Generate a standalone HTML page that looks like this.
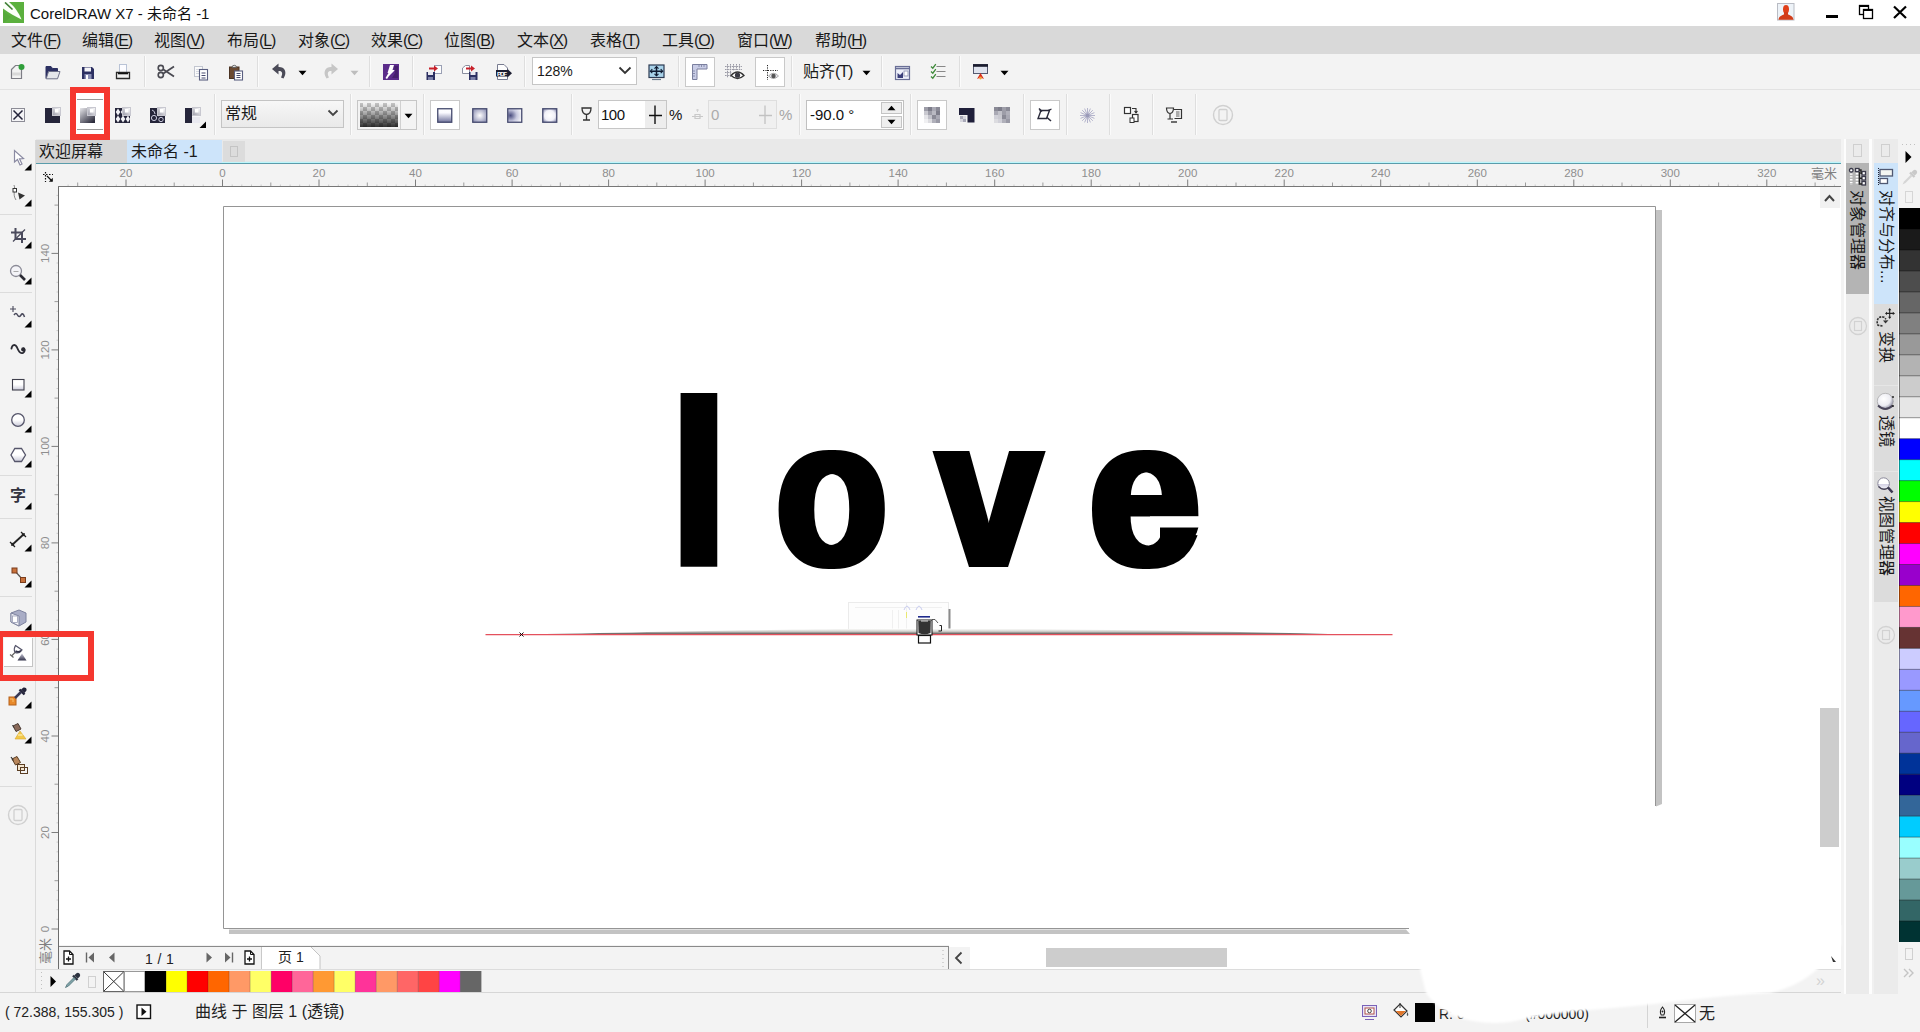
<!DOCTYPE html>
<html lang="zh"><head><meta charset="utf-8"><title>CorelDRAW X7 - 未命名 -1</title>
<style>
html,body{margin:0;padding:0;}
body{width:1920px;height:1032px;overflow:hidden;position:relative;background:#f3f3f3;
font-family:"Liberation Sans","Noto Sans CJK SC",sans-serif;}
body>div,body>svg,body>span{position:absolute;display:block;}
.t{white-space:nowrap;}
u{text-decoration:underline;text-underline-offset:2px;text-decoration-thickness:1px;}
svg text{font-family:"Liberation Sans","Noto Sans CJK SC",sans-serif;}
</style></head><body>
<div style="left:0px;top:0px;width:1920px;height:26px;background:#fff;"></div>
<div style="left:0px;top:26px;width:1920px;height:28px;background:#d9d9d9;"></div>
<div style="left:0px;top:54px;width:1920px;height:36px;background:#f3f3f3;"></div>
<div style="left:0px;top:89px;width:1920px;height:1px;background:#e2e2e2;"></div>
<div style="left:0px;top:90px;width:1920px;height:49px;background:#f3f3f3;"></div>
<div style="left:0px;top:139px;width:1920px;height:25px;background:#e9e9e9;"></div>
<div style="left:0px;top:139px;width:36px;height:860px;background:#f3f3f3;"></div>
<div style="left:36px;top:161px;width:1805px;height:1px;background:#dde8ea;"></div>
<div style="left:36px;top:162px;width:1805px;height:1px;background:#bdf6fb;"></div>
<div style="left:36px;top:163px;width:1805px;height:1px;background:#5a9cab;"></div>
<div style="left:36px;top:164px;width:1805px;height:23px;background:#f3f3f3;"></div>
<div style="left:36px;top:187px;width:23px;height:782px;background:#f3f3f3;"></div>
<div style="left:59px;top:187px;width:1782px;height:758px;background:#fff;"></div>
<div style="left:59px;top:945px;width:1782px;height:24px;background:#f3f3f3;"></div>
<div style="left:36px;top:969px;width:1805px;height:25px;background:#f3f3f3;"></div>
<div style="left:0px;top:994px;width:1920px;height:38px;background:#f3f3f3;"></div>
<div style="left:1841px;top:139px;width:79px;height:855px;background:#ececec;"></div>
<svg style="left:3px;top:2px;" width="21" height="21" viewBox="0 0 21 21"><rect width="21" height="21" fill="#5bb03e"/><path d="M0 0 L6 0 C11 4 16 11 18.5 17.5 C13 15 6 11 0 6.5 Z" fill="#fbfff8"/><path d="M2 0.5 L9.5 7.5" stroke="#3f7f35" stroke-width="1.7"/><path d="M0 21 V9 L8 15 Z" fill="#55a93a"/></svg>
<span class="t" style="left:30px;top:4px;font-size:15px;line-height:20px;color:#111;">CorelDRAW X7 - 未命名 -1</span>
<svg style="left:1776px;top:2px;" width="20" height="20" viewBox="0 0 20 20"><rect x="1.5" y="1.5" width="16.5" height="16.5" fill="#eef3f8" stroke="#b9bcc4"/><ellipse cx="10" cy="7.3" rx="3" ry="4.4" fill="#e0401a"/><path d="M2.5 17.8 C3 13.5 6.5 13.5 8 12.2 L12 12.2 C13.5 13.5 17 13.5 17.5 17.8Z" fill="#d23c18"/><rect x="8" y="10" width="4" height="3.5" fill="#d23c18"/></svg>
<div style="left:1826px;top:15px;width:12px;height:3px;background:#000;"></div>
<svg style="left:1858px;top:4px;" width="16" height="16" viewBox="0 0 16 16"><rect x="1.5" y="1.5" width="9" height="9" fill="#fff" stroke="#000" stroke-width="1.3"/><path d="M1 2 H11" stroke="#000" stroke-width="2"/><rect x="5.5" y="5.5" width="9" height="9" fill="#fff" stroke="#000" stroke-width="1.3"/><path d="M5 6 H15" stroke="#000" stroke-width="2"/></svg>
<svg style="left:1892px;top:4px;" width="16" height="16" viewBox="0 0 16 16"><path d="M2 2.5 L14 14 M14 2.5 L2 14" stroke="#000" stroke-width="2.2"/></svg>
<span class="t" style="left:11px;top:30px;font-size:16px;line-height:22px;color:#1a1a1a;">文件<span style="letter-spacing:-1.1px">(<u>F</u>)</span></span>
<span class="t" style="left:82px;top:30px;font-size:16px;line-height:22px;color:#1a1a1a;">编辑<span style="letter-spacing:-1.1px">(<u>E</u>)</span></span>
<span class="t" style="left:154px;top:30px;font-size:16px;line-height:22px;color:#1a1a1a;">视图<span style="letter-spacing:-1.1px">(<u>V</u>)</span></span>
<span class="t" style="left:227px;top:30px;font-size:16px;line-height:22px;color:#1a1a1a;">布局<span style="letter-spacing:-1.1px">(<u>L</u>)</span></span>
<span class="t" style="left:298px;top:30px;font-size:16px;line-height:22px;color:#1a1a1a;">对象<span style="letter-spacing:-1.1px">(<u>C</u>)</span></span>
<span class="t" style="left:371px;top:30px;font-size:16px;line-height:22px;color:#1a1a1a;">效果<span style="letter-spacing:-1.1px">(<u>C</u>)</span></span>
<span class="t" style="left:444px;top:30px;font-size:16px;line-height:22px;color:#1a1a1a;">位图<span style="letter-spacing:-1.1px">(<u>B</u>)</span></span>
<span class="t" style="left:517px;top:30px;font-size:16px;line-height:22px;color:#1a1a1a;">文本<span style="letter-spacing:-1.1px">(<u>X</u>)</span></span>
<span class="t" style="left:590px;top:30px;font-size:16px;line-height:22px;color:#1a1a1a;">表格<span style="letter-spacing:-1.1px">(<u>T</u>)</span></span>
<span class="t" style="left:662px;top:30px;font-size:16px;line-height:22px;color:#1a1a1a;">工具<span style="letter-spacing:-1.1px">(<u>O</u>)</span></span>
<span class="t" style="left:737px;top:30px;font-size:16px;line-height:22px;color:#1a1a1a;">窗口<span style="letter-spacing:-1.1px">(<u>W</u>)</span></span>
<span class="t" style="left:815px;top:30px;font-size:16px;line-height:22px;color:#1a1a1a;">帮助<span style="letter-spacing:-1.1px">(<u>H</u>)</span></span>
<div style="left:36px;top:140px;width:91px;height:23px;background:#d6d6d6;"></div>
<div style="left:127px;top:140px;width:95px;height:23px;background:#cde4fa;"></div>
<div style="left:223px;top:141px;width:22px;height:21px;background:#dcdcdc;"></div>
<svg style="left:229px;top:145px;" width="10" height="13" viewBox="0 0 10 13"><rect x="1.5" y="1.5" width="7" height="10" fill="none" stroke="#c4c4c4"/></svg>
<span class="t" style="left:39px;top:141px;font-size:16px;line-height:22px;color:#1a1a1a;">欢迎屏幕</span>
<span class="t" style="left:131px;top:141px;font-size:16px;line-height:22px;color:#1a1a1a;">未命名 -1</span>
<svg style="left:36px;top:164px;" width="1805" height="23" viewBox="0 0 1805 23"><path d="M32.1 20.5 V22" stroke="#cbcbcb"/><path d="M41.7 18.5 V22" stroke="#9c9c9c"/><path d="M51.4 20.5 V22" stroke="#cbcbcb"/><path d="M61.0 20.5 V22" stroke="#cbcbcb"/><path d="M70.7 20.5 V22" stroke="#cbcbcb"/><path d="M80.3 20.5 V22" stroke="#cbcbcb"/><path d="M90.0 15.5 V22" stroke="#7d7d7d"/><text x="90.0" y="13" font-size="11.5" fill="#8e8e8e" text-anchor="middle">20</text><path d="M99.6 20.5 V22" stroke="#cbcbcb"/><path d="M109.3 20.5 V22" stroke="#cbcbcb"/><path d="M118.9 20.5 V22" stroke="#cbcbcb"/><path d="M128.6 20.5 V22" stroke="#cbcbcb"/><path d="M138.2 18.5 V22" stroke="#9c9c9c"/><path d="M147.9 20.5 V22" stroke="#cbcbcb"/><path d="M157.5 20.5 V22" stroke="#cbcbcb"/><path d="M167.2 20.5 V22" stroke="#cbcbcb"/><path d="M176.8 20.5 V22" stroke="#cbcbcb"/><path d="M186.5 15.5 V22" stroke="#7d7d7d"/><text x="186.5" y="13" font-size="11.5" fill="#8e8e8e" text-anchor="middle">0</text><path d="M196.2 20.5 V22" stroke="#cbcbcb"/><path d="M205.8 20.5 V22" stroke="#cbcbcb"/><path d="M215.5 20.5 V22" stroke="#cbcbcb"/><path d="M225.1 20.5 V22" stroke="#cbcbcb"/><path d="M234.8 18.5 V22" stroke="#9c9c9c"/><path d="M244.4 20.5 V22" stroke="#cbcbcb"/><path d="M254.1 20.5 V22" stroke="#cbcbcb"/><path d="M263.7 20.5 V22" stroke="#cbcbcb"/><path d="M273.4 20.5 V22" stroke="#cbcbcb"/><path d="M283.0 15.5 V22" stroke="#7d7d7d"/><text x="283.0" y="13" font-size="11.5" fill="#8e8e8e" text-anchor="middle">20</text><path d="M292.7 20.5 V22" stroke="#cbcbcb"/><path d="M302.3 20.5 V22" stroke="#cbcbcb"/><path d="M312.0 20.5 V22" stroke="#cbcbcb"/><path d="M321.6 20.5 V22" stroke="#cbcbcb"/><path d="M331.3 18.5 V22" stroke="#9c9c9c"/><path d="M340.9 20.5 V22" stroke="#cbcbcb"/><path d="M350.6 20.5 V22" stroke="#cbcbcb"/><path d="M360.2 20.5 V22" stroke="#cbcbcb"/><path d="M369.9 20.5 V22" stroke="#cbcbcb"/><path d="M379.5 15.5 V22" stroke="#7d7d7d"/><text x="379.5" y="13" font-size="11.5" fill="#8e8e8e" text-anchor="middle">40</text><path d="M389.2 20.5 V22" stroke="#cbcbcb"/><path d="M398.8 20.5 V22" stroke="#cbcbcb"/><path d="M408.5 20.5 V22" stroke="#cbcbcb"/><path d="M418.1 20.5 V22" stroke="#cbcbcb"/><path d="M427.8 18.5 V22" stroke="#9c9c9c"/><path d="M437.5 20.5 V22" stroke="#cbcbcb"/><path d="M447.1 20.5 V22" stroke="#cbcbcb"/><path d="M456.8 20.5 V22" stroke="#cbcbcb"/><path d="M466.4 20.5 V22" stroke="#cbcbcb"/><path d="M476.1 15.5 V22" stroke="#7d7d7d"/><text x="476.1" y="13" font-size="11.5" fill="#8e8e8e" text-anchor="middle">60</text><path d="M485.7 20.5 V22" stroke="#cbcbcb"/><path d="M495.4 20.5 V22" stroke="#cbcbcb"/><path d="M505.0 20.5 V22" stroke="#cbcbcb"/><path d="M514.7 20.5 V22" stroke="#cbcbcb"/><path d="M524.3 18.5 V22" stroke="#9c9c9c"/><path d="M534.0 20.5 V22" stroke="#cbcbcb"/><path d="M543.6 20.5 V22" stroke="#cbcbcb"/><path d="M553.3 20.5 V22" stroke="#cbcbcb"/><path d="M562.9 20.5 V22" stroke="#cbcbcb"/><path d="M572.6 15.5 V22" stroke="#7d7d7d"/><text x="572.6" y="13" font-size="11.5" fill="#8e8e8e" text-anchor="middle">80</text><path d="M582.2 20.5 V22" stroke="#cbcbcb"/><path d="M591.9 20.5 V22" stroke="#cbcbcb"/><path d="M601.5 20.5 V22" stroke="#cbcbcb"/><path d="M611.2 20.5 V22" stroke="#cbcbcb"/><path d="M620.8 18.5 V22" stroke="#9c9c9c"/><path d="M630.5 20.5 V22" stroke="#cbcbcb"/><path d="M640.1 20.5 V22" stroke="#cbcbcb"/><path d="M649.8 20.5 V22" stroke="#cbcbcb"/><path d="M659.4 20.5 V22" stroke="#cbcbcb"/><path d="M669.1 15.5 V22" stroke="#7d7d7d"/><text x="669.1" y="13" font-size="11.5" fill="#8e8e8e" text-anchor="middle">100</text><path d="M678.8 20.5 V22" stroke="#cbcbcb"/><path d="M688.4 20.5 V22" stroke="#cbcbcb"/><path d="M698.1 20.5 V22" stroke="#cbcbcb"/><path d="M707.7 20.5 V22" stroke="#cbcbcb"/><path d="M717.4 18.5 V22" stroke="#9c9c9c"/><path d="M727.0 20.5 V22" stroke="#cbcbcb"/><path d="M736.7 20.5 V22" stroke="#cbcbcb"/><path d="M746.3 20.5 V22" stroke="#cbcbcb"/><path d="M756.0 20.5 V22" stroke="#cbcbcb"/><path d="M765.6 15.5 V22" stroke="#7d7d7d"/><text x="765.6" y="13" font-size="11.5" fill="#8e8e8e" text-anchor="middle">120</text><path d="M775.3 20.5 V22" stroke="#cbcbcb"/><path d="M784.9 20.5 V22" stroke="#cbcbcb"/><path d="M794.6 20.5 V22" stroke="#cbcbcb"/><path d="M804.2 20.5 V22" stroke="#cbcbcb"/><path d="M813.9 18.5 V22" stroke="#9c9c9c"/><path d="M823.5 20.5 V22" stroke="#cbcbcb"/><path d="M833.2 20.5 V22" stroke="#cbcbcb"/><path d="M842.8 20.5 V22" stroke="#cbcbcb"/><path d="M852.5 20.5 V22" stroke="#cbcbcb"/><path d="M862.1 15.5 V22" stroke="#7d7d7d"/><text x="862.1" y="13" font-size="11.5" fill="#8e8e8e" text-anchor="middle">140</text><path d="M871.8 20.5 V22" stroke="#cbcbcb"/><path d="M881.4 20.5 V22" stroke="#cbcbcb"/><path d="M891.1 20.5 V22" stroke="#cbcbcb"/><path d="M900.7 20.5 V22" stroke="#cbcbcb"/><path d="M910.4 18.5 V22" stroke="#9c9c9c"/><path d="M920.1 20.5 V22" stroke="#cbcbcb"/><path d="M929.7 20.5 V22" stroke="#cbcbcb"/><path d="M939.4 20.5 V22" stroke="#cbcbcb"/><path d="M949.0 20.5 V22" stroke="#cbcbcb"/><path d="M958.7 15.5 V22" stroke="#7d7d7d"/><text x="958.7" y="13" font-size="11.5" fill="#8e8e8e" text-anchor="middle">160</text><path d="M968.3 20.5 V22" stroke="#cbcbcb"/><path d="M978.0 20.5 V22" stroke="#cbcbcb"/><path d="M987.6 20.5 V22" stroke="#cbcbcb"/><path d="M997.3 20.5 V22" stroke="#cbcbcb"/><path d="M1006.9 18.5 V22" stroke="#9c9c9c"/><path d="M1016.6 20.5 V22" stroke="#cbcbcb"/><path d="M1026.2 20.5 V22" stroke="#cbcbcb"/><path d="M1035.9 20.5 V22" stroke="#cbcbcb"/><path d="M1045.5 20.5 V22" stroke="#cbcbcb"/><path d="M1055.2 15.5 V22" stroke="#7d7d7d"/><text x="1055.2" y="13" font-size="11.5" fill="#8e8e8e" text-anchor="middle">180</text><path d="M1064.8 20.5 V22" stroke="#cbcbcb"/><path d="M1074.5 20.5 V22" stroke="#cbcbcb"/><path d="M1084.1 20.5 V22" stroke="#cbcbcb"/><path d="M1093.8 20.5 V22" stroke="#cbcbcb"/><path d="M1103.4 18.5 V22" stroke="#9c9c9c"/><path d="M1113.1 20.5 V22" stroke="#cbcbcb"/><path d="M1122.7 20.5 V22" stroke="#cbcbcb"/><path d="M1132.4 20.5 V22" stroke="#cbcbcb"/><path d="M1142.0 20.5 V22" stroke="#cbcbcb"/><path d="M1151.7 15.5 V22" stroke="#7d7d7d"/><text x="1151.7" y="13" font-size="11.5" fill="#8e8e8e" text-anchor="middle">200</text><path d="M1161.4 20.5 V22" stroke="#cbcbcb"/><path d="M1171.0 20.5 V22" stroke="#cbcbcb"/><path d="M1180.7 20.5 V22" stroke="#cbcbcb"/><path d="M1190.3 20.5 V22" stroke="#cbcbcb"/><path d="M1200.0 18.5 V22" stroke="#9c9c9c"/><path d="M1209.6 20.5 V22" stroke="#cbcbcb"/><path d="M1219.3 20.5 V22" stroke="#cbcbcb"/><path d="M1228.9 20.5 V22" stroke="#cbcbcb"/><path d="M1238.6 20.5 V22" stroke="#cbcbcb"/><path d="M1248.2 15.5 V22" stroke="#7d7d7d"/><text x="1248.2" y="13" font-size="11.5" fill="#8e8e8e" text-anchor="middle">220</text><path d="M1257.9 20.5 V22" stroke="#cbcbcb"/><path d="M1267.5 20.5 V22" stroke="#cbcbcb"/><path d="M1277.2 20.5 V22" stroke="#cbcbcb"/><path d="M1286.8 20.5 V22" stroke="#cbcbcb"/><path d="M1296.5 18.5 V22" stroke="#9c9c9c"/><path d="M1306.1 20.5 V22" stroke="#cbcbcb"/><path d="M1315.8 20.5 V22" stroke="#cbcbcb"/><path d="M1325.4 20.5 V22" stroke="#cbcbcb"/><path d="M1335.1 20.5 V22" stroke="#cbcbcb"/><path d="M1344.7 15.5 V22" stroke="#7d7d7d"/><text x="1344.7" y="13" font-size="11.5" fill="#8e8e8e" text-anchor="middle">240</text><path d="M1354.4 20.5 V22" stroke="#cbcbcb"/><path d="M1364.0 20.5 V22" stroke="#cbcbcb"/><path d="M1373.7 20.5 V22" stroke="#cbcbcb"/><path d="M1383.3 20.5 V22" stroke="#cbcbcb"/><path d="M1393.0 18.5 V22" stroke="#9c9c9c"/><path d="M1402.7 20.5 V22" stroke="#cbcbcb"/><path d="M1412.3 20.5 V22" stroke="#cbcbcb"/><path d="M1422.0 20.5 V22" stroke="#cbcbcb"/><path d="M1431.6 20.5 V22" stroke="#cbcbcb"/><path d="M1441.3 15.5 V22" stroke="#7d7d7d"/><text x="1441.3" y="13" font-size="11.5" fill="#8e8e8e" text-anchor="middle">260</text><path d="M1450.9 20.5 V22" stroke="#cbcbcb"/><path d="M1460.6 20.5 V22" stroke="#cbcbcb"/><path d="M1470.2 20.5 V22" stroke="#cbcbcb"/><path d="M1479.9 20.5 V22" stroke="#cbcbcb"/><path d="M1489.5 18.5 V22" stroke="#9c9c9c"/><path d="M1499.2 20.5 V22" stroke="#cbcbcb"/><path d="M1508.8 20.5 V22" stroke="#cbcbcb"/><path d="M1518.5 20.5 V22" stroke="#cbcbcb"/><path d="M1528.1 20.5 V22" stroke="#cbcbcb"/><path d="M1537.8 15.5 V22" stroke="#7d7d7d"/><text x="1537.8" y="13" font-size="11.5" fill="#8e8e8e" text-anchor="middle">280</text><path d="M1547.4 20.5 V22" stroke="#cbcbcb"/><path d="M1557.1 20.5 V22" stroke="#cbcbcb"/><path d="M1566.7 20.5 V22" stroke="#cbcbcb"/><path d="M1576.4 20.5 V22" stroke="#cbcbcb"/><path d="M1586.0 18.5 V22" stroke="#9c9c9c"/><path d="M1595.7 20.5 V22" stroke="#cbcbcb"/><path d="M1605.3 20.5 V22" stroke="#cbcbcb"/><path d="M1615.0 20.5 V22" stroke="#cbcbcb"/><path d="M1624.6 20.5 V22" stroke="#cbcbcb"/><path d="M1634.3 15.5 V22" stroke="#7d7d7d"/><text x="1634.3" y="13" font-size="11.5" fill="#8e8e8e" text-anchor="middle">300</text><path d="M1644.0 20.5 V22" stroke="#cbcbcb"/><path d="M1653.6 20.5 V22" stroke="#cbcbcb"/><path d="M1663.3 20.5 V22" stroke="#cbcbcb"/><path d="M1672.9 20.5 V22" stroke="#cbcbcb"/><path d="M1682.6 18.5 V22" stroke="#9c9c9c"/><path d="M1692.2 20.5 V22" stroke="#cbcbcb"/><path d="M1701.9 20.5 V22" stroke="#cbcbcb"/><path d="M1711.5 20.5 V22" stroke="#cbcbcb"/><path d="M1721.2 20.5 V22" stroke="#cbcbcb"/><path d="M1730.8 15.5 V22" stroke="#7d7d7d"/><text x="1730.8" y="13" font-size="11.5" fill="#8e8e8e" text-anchor="middle">320</text><path d="M1740.5 20.5 V22" stroke="#cbcbcb"/><path d="M1750.1 20.5 V22" stroke="#cbcbcb"/><path d="M1759.8 20.5 V22" stroke="#cbcbcb"/><path d="M1769.4 20.5 V22" stroke="#cbcbcb"/><path d="M1779.1 18.5 V22" stroke="#9c9c9c"/><path d="M1788.7 20.5 V22" stroke="#cbcbcb"/><path d="M1798.4 20.5 V22" stroke="#cbcbcb"/><path d="M22 22.5 H1805" stroke="#777"/><text x="1788" y="13.5" font-size="13" fill="#808080" text-anchor="middle">毫米</text></svg>
<svg style="left:36px;top:187px;" width="23" height="790" viewBox="0 0 23 790"><path d="M15.5 742.0 H22" stroke="#7d7d7d"/><text transform="translate(13,742.0) rotate(-90)" font-size="11.5" fill="#8e8e8e" text-anchor="middle">0</text><path d="M20.5 732.3 H22" stroke="#cbcbcb"/><path d="M20.5 722.7 H22" stroke="#cbcbcb"/><path d="M20.5 713.0 H22" stroke="#cbcbcb"/><path d="M20.5 703.4 H22" stroke="#cbcbcb"/><path d="M18.5 693.7 H22" stroke="#9c9c9c"/><path d="M20.5 684.1 H22" stroke="#cbcbcb"/><path d="M20.5 674.4 H22" stroke="#cbcbcb"/><path d="M20.5 664.8 H22" stroke="#cbcbcb"/><path d="M20.5 655.1 H22" stroke="#cbcbcb"/><path d="M15.5 645.5 H22" stroke="#7d7d7d"/><text transform="translate(13,645.5) rotate(-90)" font-size="11.5" fill="#8e8e8e" text-anchor="middle">20</text><path d="M20.5 635.8 H22" stroke="#cbcbcb"/><path d="M20.5 626.2 H22" stroke="#cbcbcb"/><path d="M20.5 616.5 H22" stroke="#cbcbcb"/><path d="M20.5 606.9 H22" stroke="#cbcbcb"/><path d="M18.5 597.2 H22" stroke="#9c9c9c"/><path d="M20.5 587.6 H22" stroke="#cbcbcb"/><path d="M20.5 577.9 H22" stroke="#cbcbcb"/><path d="M20.5 568.3 H22" stroke="#cbcbcb"/><path d="M20.5 558.6 H22" stroke="#cbcbcb"/><path d="M15.5 549.0 H22" stroke="#7d7d7d"/><text transform="translate(13,549.0) rotate(-90)" font-size="11.5" fill="#8e8e8e" text-anchor="middle">40</text><path d="M20.5 539.3 H22" stroke="#cbcbcb"/><path d="M20.5 529.7 H22" stroke="#cbcbcb"/><path d="M20.5 520.0 H22" stroke="#cbcbcb"/><path d="M20.5 510.4 H22" stroke="#cbcbcb"/><path d="M18.5 500.7 H22" stroke="#9c9c9c"/><path d="M20.5 491.0 H22" stroke="#cbcbcb"/><path d="M20.5 481.4 H22" stroke="#cbcbcb"/><path d="M20.5 471.7 H22" stroke="#cbcbcb"/><path d="M20.5 462.1 H22" stroke="#cbcbcb"/><path d="M15.5 452.4 H22" stroke="#7d7d7d"/><text transform="translate(13,452.4) rotate(-90)" font-size="11.5" fill="#8e8e8e" text-anchor="middle">60</text><path d="M20.5 442.8 H22" stroke="#cbcbcb"/><path d="M20.5 433.1 H22" stroke="#cbcbcb"/><path d="M20.5 423.5 H22" stroke="#cbcbcb"/><path d="M20.5 413.8 H22" stroke="#cbcbcb"/><path d="M18.5 404.2 H22" stroke="#9c9c9c"/><path d="M20.5 394.5 H22" stroke="#cbcbcb"/><path d="M20.5 384.9 H22" stroke="#cbcbcb"/><path d="M20.5 375.2 H22" stroke="#cbcbcb"/><path d="M20.5 365.6 H22" stroke="#cbcbcb"/><path d="M15.5 355.9 H22" stroke="#7d7d7d"/><text transform="translate(13,355.9) rotate(-90)" font-size="11.5" fill="#8e8e8e" text-anchor="middle">80</text><path d="M20.5 346.3 H22" stroke="#cbcbcb"/><path d="M20.5 336.6 H22" stroke="#cbcbcb"/><path d="M20.5 327.0 H22" stroke="#cbcbcb"/><path d="M20.5 317.3 H22" stroke="#cbcbcb"/><path d="M18.5 307.7 H22" stroke="#9c9c9c"/><path d="M20.5 298.0 H22" stroke="#cbcbcb"/><path d="M20.5 288.4 H22" stroke="#cbcbcb"/><path d="M20.5 278.7 H22" stroke="#cbcbcb"/><path d="M20.5 269.1 H22" stroke="#cbcbcb"/><path d="M15.5 259.4 H22" stroke="#7d7d7d"/><text transform="translate(13,259.4) rotate(-90)" font-size="11.5" fill="#8e8e8e" text-anchor="middle">100</text><path d="M20.5 249.7 H22" stroke="#cbcbcb"/><path d="M20.5 240.1 H22" stroke="#cbcbcb"/><path d="M20.5 230.4 H22" stroke="#cbcbcb"/><path d="M20.5 220.8 H22" stroke="#cbcbcb"/><path d="M18.5 211.1 H22" stroke="#9c9c9c"/><path d="M20.5 201.5 H22" stroke="#cbcbcb"/><path d="M20.5 191.8 H22" stroke="#cbcbcb"/><path d="M20.5 182.2 H22" stroke="#cbcbcb"/><path d="M20.5 172.5 H22" stroke="#cbcbcb"/><path d="M15.5 162.9 H22" stroke="#7d7d7d"/><text transform="translate(13,162.9) rotate(-90)" font-size="11.5" fill="#8e8e8e" text-anchor="middle">120</text><path d="M20.5 153.2 H22" stroke="#cbcbcb"/><path d="M20.5 143.6 H22" stroke="#cbcbcb"/><path d="M20.5 133.9 H22" stroke="#cbcbcb"/><path d="M20.5 124.3 H22" stroke="#cbcbcb"/><path d="M18.5 114.6 H22" stroke="#9c9c9c"/><path d="M20.5 105.0 H22" stroke="#cbcbcb"/><path d="M20.5 95.3 H22" stroke="#cbcbcb"/><path d="M20.5 85.7 H22" stroke="#cbcbcb"/><path d="M20.5 76.0 H22" stroke="#cbcbcb"/><path d="M15.5 66.4 H22" stroke="#7d7d7d"/><text transform="translate(13,66.4) rotate(-90)" font-size="11.5" fill="#8e8e8e" text-anchor="middle">140</text><path d="M20.5 56.7 H22" stroke="#cbcbcb"/><path d="M20.5 47.1 H22" stroke="#cbcbcb"/><path d="M20.5 37.4 H22" stroke="#cbcbcb"/><path d="M20.5 27.8 H22" stroke="#cbcbcb"/><path d="M18.5 18.1 H22" stroke="#9c9c9c"/><path d="M20.5 8.4 H22" stroke="#cbcbcb"/><path d="M22.5 0 V782" stroke="#6c6c6c"/><text transform="translate(14,764) rotate(-90)" font-size="13" fill="#808080" text-anchor="middle">毫米</text></svg>
<svg style="left:41px;top:169px;" width="14" height="14" viewBox="0 0 14 14"><path d="M2 5.5 H12 M4.5 3 V13" stroke="#111" stroke-width="1.2" stroke-dasharray="1.5 1.5"/><path d="M6 7 L11 12" stroke="#111" stroke-width="1.3"/><path d="M11.8 12.8 V8.8 L7.8 12.8Z" fill="#111"/></svg>
<svg style="left:220px;top:203px;" width="1450" height="735" viewBox="0 0 1450 735"><path d="M9 726.5 H1186 L1190 731 H9Z" fill="#c3c3c3"/><path d="M1436 7 H1442 V601 L1436 603.5Z" fill="#c3c3c3"/><path d="M1189 725.5 H3.5 V3.5 H1435.5 V603" fill="none" stroke="#959595"/></svg>
<svg style="left:460px;top:360px;" width="960" height="320" viewBox="0 0 960 320"><defs><filter id="dil" x="-2%" y="-2%" width="104%" height="104%"><feMorphology operator="dilate" radius="3 0"/></filter><clipPath id="ec"><ellipse cx="685.3" cy="149.3" rx="55.8" ry="60"/></clipPath></defs><g filter="url(#dil)"><text transform="translate(211.56,204.60) scale(0.9680,1.1402)" font-size="204.8" font-weight="bold" stroke="#000" stroke-width="3.61" stroke-linejoin="miter">l</text><text transform="translate(316.31,204.56) scale(0.8863,1.0223)" font-size="204.8" font-weight="bold" stroke="#000" stroke-width="3.98" stroke-linejoin="miter">o</text><text transform="translate(477.17,204.60) scale(0.9109,1.0323)" font-size="204.8" font-weight="bold" stroke="#000" stroke-width="3.91" stroke-linejoin="miter">v</text><text transform="translate(629.08,204.56) scale(0.9778,1.0223)" font-size="204.8" font-weight="bold" stroke="#000" stroke-width="3.80" stroke-linejoin="miter">e</text></g><rect x="700" y="167.3" width="42" height="16" fill="#000" clip-path="url(#ec)"/><rect x="690" y="156.4" width="52" height="10.9" fill="#fff"/></svg>
<div style="left:1820px;top:187px;width:20px;height:21px;background:#f1f1f1;"></div>
<svg style="left:1823px;top:193px;" width="13" height="10" viewBox="0 0 13 10"><path d="M2 8 L6.5 3 L11 8" fill="none" stroke="#444" stroke-width="2"/></svg>
<div style="left:1820px;top:708px;width:19px;height:139px;background:#cdcdcd;"></div>
<div style="left:59px;top:946px;width:890px;height:1px;background:#8a8a8a;"></div>
<div style="left:948px;top:946px;width:1px;height:23px;background:#8a8a8a;"></div>
<div style="left:949px;top:945px;width:892px;height:24px;background:#fff;"></div>
<div style="left:949px;top:947px;width:21px;height:22px;background:#f3f3f3;"></div>
<svg style="left:953px;top:951px;" width="12" height="14" viewBox="0 0 12 14"><path d="M8.5 1.5 L3 7 L8.5 12.5" fill="none" stroke="#444" stroke-width="1.8"/></svg>
<div style="left:1046px;top:948px;width:181px;height:19px;background:#cdcdcd;"></div>
<div style="left:36px;top:969px;width:1805px;height:1px;background:#dcdcdc;"></div>
<div style="left:0px;top:992px;width:1920px;height:1px;background:#d6d6d6;"></div>
<svg style="left:940px;top:949px;" width="6" height="18" viewBox="0 0 6 18"><path d="M3 1 V18" stroke="#b5b5b5" stroke-dasharray="1 3"/></svg>
<svg style="left:63px;top:950px;" width="11" height="15" viewBox="0 0 11 15"><path d="M1 1 H6.5 L10 4.5 V14 H1 Z" fill="#fff" stroke="#111" stroke-width="1.3"/><path d="M6.5 1 V4.5 H10" fill="none" stroke="#111" stroke-width="1"/><path d="M3 9 H8 M5.5 6.5 V11.5" stroke="#111" stroke-width="1.3"/></svg>
<svg style="left:244px;top:950px;" width="11" height="15" viewBox="0 0 11 15"><path d="M1 1 H6.5 L10 4.5 V14 H1 Z" fill="#fff" stroke="#111" stroke-width="1.3"/><path d="M6.5 1 V4.5 H10" fill="none" stroke="#111" stroke-width="1"/><path d="M3 9 H8 M5.5 6.5 V11.5" stroke="#111" stroke-width="1.3"/></svg>
<svg style="left:85px;top:952px;" width="10" height="11" viewBox="0 0 10 11"><path d="M1.5 0.5 V10.5" stroke="#666" stroke-width="1.4"/><path d="M9 0.5 L3.5 5.5 L9 10.5Z" fill="#666"/></svg>
<svg style="left:108px;top:952px;" width="8" height="11" viewBox="0 0 8 11"><path d="M6.5 0.5 L1 5.5 L6.5 10.5Z" fill="#666"/></svg>
<svg style="left:205px;top:952px;" width="8" height="11" viewBox="0 0 8 11"><path d="M1.5 0.5 L7 5.5 L1.5 10.5Z" fill="#666"/></svg>
<svg style="left:224px;top:952px;" width="10" height="11" viewBox="0 0 10 11"><path d="M8.5 0.5 V10.5" stroke="#666" stroke-width="1.4"/><path d="M1 0.5 L6.5 5.5 L1 10.5Z" fill="#666"/></svg>
<span class="t" style="left:145px;top:949px;font-size:14px;line-height:20px;color:#222;letter-spacing:.4px;">1 / 1</span>
<div style="left:261px;top:947px;width:1px;height:22px;background:#c9c9c9;"></div>
<svg style="left:262px;top:947px;" width="62" height="22" viewBox="0 0 62 22"><path d="M0 0 H49 L58 9 V22 H0Z" fill="#fff"/><path d="M49 0 L58 9 V22" fill="none" stroke="#c4c4c4"/></svg>
<span class="t" style="left:278px;top:947px;font-size:14px;line-height:21px;color:#222;">页 1</span>
<svg style="left:38px;top:971px;" width="8" height="20" viewBox="0 0 8 20"><path d="M3.5 1 V20" stroke="#c0c0c0" stroke-dasharray="1 3"/></svg>
<svg style="left:49px;top:975px;" width="8" height="13" viewBox="0 0 8 13"><path d="M1.5 1 L7 6.5 L1.5 12Z" fill="#000"/></svg>
<svg style="left:63px;top:972px;" width="18" height="18" viewBox="0 0 18 18"><path d="M13.5 1.2 a2.4 2.4 0 0 1 3.3 3.3 L14.8 6.6 L11.4 3.2Z" fill="#2d3340"/><path d="M10 3.5 L14.5 8" stroke="#2d3340" stroke-width="2.4"/><path d="M11 5.5 L4 12.5 L2.5 15.5 L5.5 14 L12.5 7Z" fill="#7fa3a8" stroke="#51737a" stroke-width=".8"/></svg>
<svg style="left:87px;top:975px;" width="10" height="14" viewBox="0 0 10 14"><rect x="1.5" y="1.5" width="7" height="11" fill="none" stroke="#d0d0d0"/></svg>
<svg style="left:103px;top:970.5px;" width="380" height="21" viewBox="0 0 380 21"><rect x="0.5" y="0.5" width="20.5" height="20" fill="#fff" stroke="#666"/><path d="M1.0 1 L20.5 20 M20.5 1 L1.0 20" stroke="#333" stroke-width="1"/><rect x="21.0" y="0" width="21.1" height="21" fill="#ffffff"/><rect x="21.5" y="0.5" width="20.5" height="20" fill="none" stroke="#999"/><rect x="42.0" y="0" width="21.1" height="21" fill="#000000"/><rect x="63.1" y="0" width="21.1" height="21" fill="#ffff00"/><rect x="84.1" y="0" width="21.1" height="21" fill="#ff0000"/><rect x="105.1" y="0" width="21.1" height="21" fill="#ff6600"/><rect x="126.1" y="0" width="21.1" height="21" fill="#ff9966"/><rect x="147.1" y="0" width="21.1" height="21" fill="#ffff66"/><rect x="168.2" y="0" width="21.1" height="21" fill="#ff0066"/><rect x="189.2" y="0" width="21.1" height="21" fill="#ff6699"/><rect x="210.2" y="0" width="21.1" height="21" fill="#ff9933"/><rect x="231.2" y="0" width="21.1" height="21" fill="#ffff66"/><rect x="252.2" y="0" width="21.1" height="21" fill="#ff3399"/><rect x="273.3" y="0" width="21.1" height="21" fill="#ff9966"/><rect x="294.3" y="0" width="21.1" height="21" fill="#ff6666"/><rect x="315.3" y="0" width="21.1" height="21" fill="#ff4444"/><rect x="336.3" y="0" width="21.1" height="21" fill="#ff00ff"/><rect x="357.3" y="0" width="21.1" height="21" fill="#666666"/><path d="M42.0 0 V21" stroke="#000" stroke-opacity=".28" stroke-width=".8"/><path d="M63.1 0 V21" stroke="#000" stroke-opacity=".28" stroke-width=".8"/><path d="M84.1 0 V21" stroke="#000" stroke-opacity=".28" stroke-width=".8"/><path d="M105.1 0 V21" stroke="#000" stroke-opacity=".28" stroke-width=".8"/><path d="M126.1 0 V21" stroke="#000" stroke-opacity=".28" stroke-width=".8"/><path d="M147.1 0 V21" stroke="#000" stroke-opacity=".28" stroke-width=".8"/><path d="M168.2 0 V21" stroke="#000" stroke-opacity=".28" stroke-width=".8"/><path d="M189.2 0 V21" stroke="#000" stroke-opacity=".28" stroke-width=".8"/><path d="M210.2 0 V21" stroke="#000" stroke-opacity=".28" stroke-width=".8"/><path d="M231.2 0 V21" stroke="#000" stroke-opacity=".28" stroke-width=".8"/><path d="M252.2 0 V21" stroke="#000" stroke-opacity=".28" stroke-width=".8"/><path d="M273.3 0 V21" stroke="#000" stroke-opacity=".28" stroke-width=".8"/><path d="M294.3 0 V21" stroke="#000" stroke-opacity=".28" stroke-width=".8"/><path d="M315.3 0 V21" stroke="#000" stroke-opacity=".28" stroke-width=".8"/><path d="M336.3 0 V21" stroke="#000" stroke-opacity=".28" stroke-width=".8"/><path d="M357.3 0 V21" stroke="#000" stroke-opacity=".28" stroke-width=".8"/></svg>
<span class="t" style="left:5px;top:1002px;font-size:14px;line-height:20px;color:#222;">( 72.388, 155.305 )</span>
<svg style="left:136px;top:1004px;" width="16" height="16" viewBox="0 0 16 16"><rect x="1" y="1" width="13.5" height="13.5" fill="#fff" stroke="#111" stroke-width="1.4"/><path d="M5.5 3.5 L10.5 7.75 L5.5 12Z" fill="#111"/></svg>
<span class="t" style="left:195px;top:1001px;font-size:16px;line-height:22px;color:#222;">曲线 于 图层 1 (透镜)</span>
<svg style="left:1361px;top:1004px;" width="17" height="17" viewBox="0 0 17 17"><rect x="1.5" y="1.5" width="14" height="11" fill="#e9e4f5" stroke="#7a62b8"/><rect x="4" y="4" width="9" height="6" fill="#fff" stroke="#b0524a"/><circle cx="8.5" cy="7" r="1.8" fill="none" stroke="#444"/><path d="M4 15.5 H13" stroke="#7a62b8"/></svg>
<svg style="left:1392px;top:1002px;" width="18" height="18" viewBox="0 0 18 18"><path d="M8 2 L15 9 L9 15 L2 8Z" fill="#fff" stroke="#333" stroke-width="1.2"/><path d="M3.5 9 L14 9 L9 14Z" fill="#e0762a"/><path d="M8 1 V6" stroke="#333"/><path d="M15.5 10 q1.5 3 0 4 q-1.5 -1 0 -4Z" fill="#555"/></svg>
<div style="left:1415px;top:1003px;width:20px;height:19px;background:#000;"></div>
<span class="t" style="left:1439px;top:1004px;font-size:14px;line-height:20px;color:#222;">R: 0</span>
<span class="t" style="left:1525px;top:1004px;font-size:14px;line-height:20px;color:#222;">(#000000)</span>
<div style="left:1647px;top:1000px;width:1px;height:28px;background:#d4d4d4;"></div>
<svg style="left:1656px;top:1006px;" width="13" height="13" viewBox="0 0 13 13"><path d="M6.5 1 C9 4 9 7 7.8 9 H5.2 C4 7 4 4 6.5 1Z" fill="none" stroke="#222" stroke-width="1.1"/><circle cx="6.5" cy="5.5" r="1" fill="#222"/><path d="M3 11.5 H10" stroke="#222" stroke-width="1.6"/></svg>
<svg style="left:1674px;top:1004px;" width="22" height="19" viewBox="0 0 22 19"><rect x=".5" y=".5" width="21" height="18" fill="#fff" stroke="#a8a8a8"/><path d="M1 1 L21 18 M21 1 L1 18" stroke="#222" stroke-width="1.3"/></svg>
<span class="t" style="left:1699px;top:1003px;font-size:16px;line-height:22px;color:#222;">无</span>
<div style="left:1841px;top:139px;width:3px;height:855px;background:#f3f3f3;"></div>
<div style="left:1844px;top:139px;width:2px;height:855px;background:#fdfdfd;"></div>
<div style="left:1846px;top:139px;width:23px;height:855px;background:#ebebeb;"></div>
<div style="left:1869px;top:139px;width:3px;height:855px;background:#fdfdfd;"></div>
<div style="left:1872px;top:139px;width:2px;height:855px;background:#f0f0f0;"></div>
<div style="left:1874px;top:139px;width:24px;height:855px;background:#ebebeb;"></div>
<div style="left:1898px;top:139px;width:22px;height:855px;background:#f3f3f3;"></div>
<svg style="left:1852px;top:143px;" width="12" height="16" viewBox="0 0 12 16"><rect x="1.5" y="1.5" width="8" height="12" fill="none" stroke="#cfcfcf"/></svg>
<div style="left:1846px;top:163px;width:23px;height:131px;background:#b4b4b4;"></div>
<svg style="left:1848px;top:167px;" width="19" height="20" viewBox="0 0 19 20"><g fill="#fff" stroke="#3a3a4a" stroke-width="1.3"><rect x="1.5" y="1.5" width="3.5" height="3.5" rx="1.5"/><rect x="7.5" y="1.5" width="3.5" height="3"/><rect x="14" y="4.5" width="3.5" height="3.5"/><rect x="14" y="9.5" width="3.5" height="3.5"/><rect x="14" y="14.5" width="3.5" height="3.5"/></g><path d="M11.3 5 V17 H14 M11.3 11.3 H14 M11 3 H13 V6.2 H14" fill="none" stroke="#222" stroke-width="1.4"/><path d="M3.2 6.5 V18" stroke="#fff" stroke-width="2.6" stroke-dasharray="1.3 1.5"/><path d="M9 6 V18" stroke="#fff" stroke-width="2.6" stroke-dasharray="1.6 1.4"/></svg>
<span class="t" style="left:1866.5px;top:190px;font-size:16px;line-height:20px;color:#1a1a1a;transform:rotate(90deg);transform-origin:0 0;">对象管理器</span>
<svg style="left:1848px;top:316px;" width="20" height="20" viewBox="0 0 20 20"><circle cx="10" cy="10" r="8.5" fill="none" stroke="#d2d2d2" stroke-width="1.3"/><rect x="6.5" y="5.5" width="7" height="9" fill="none" stroke="#d2d2d2" stroke-width="1.2"/></svg>
<svg style="left:1880px;top:143px;" width="12" height="16" viewBox="0 0 12 16"><rect x="1.5" y="1.5" width="8" height="12" fill="none" stroke="#cfcfcf"/></svg>
<div style="left:1874px;top:163px;width:24px;height:141px;background:#cde4fa;"></div>
<div style="left:1874px;top:304px;width:24px;height:81px;background:#dcdcdc;"></div>
<div style="left:1874px;top:385px;width:24px;height:1px;background:#e6e6e6;"></div>
<div style="left:1874px;top:386px;width:24px;height:85px;background:#dcdcdc;"></div>
<div style="left:1874px;top:471px;width:24px;height:1px;background:#e6e6e6;"></div>
<div style="left:1874px;top:472px;width:24px;height:130px;background:#dcdcdc;"></div>
<svg style="left:1876px;top:166px;" width="20" height="20" viewBox="0 0 20 20"><path d="M2.5 2 V19" stroke="#223" stroke-dasharray="1 1"/><rect x="4" y="3.5" width="12.5" height="6.5" fill="#f4f6f2" stroke="#4f5872" stroke-width="1.3"/><rect x="4" y="12.5" width="7.5" height="5" fill="#fff" stroke="#4f5872" stroke-width="1.3"/></svg>
<span class="t" style="left:1895.5px;top:190px;font-size:16px;line-height:20px;color:#1a1a1a;transform:rotate(90deg);transform-origin:0 0;">对齐与分布...</span>
<svg style="left:1876px;top:307px;" width="20" height="22" viewBox="0 0 20 22"><path d="M6.5 19 L2 18.2 C-0.5 13 3 8.5 8 10.2 L10 12.2" fill="none" stroke="#333" stroke-width="1.6" stroke-dasharray="2.2 1"/><path d="M7 13.5 L12.5 13.2 L9.5 16.5Z" fill="#333"/><path d="M10 6.4 H17.5 M13.7 2.5 V10.5" stroke="#222" stroke-width="1.1"/><path d="M13.7 1 L15.3 3.2 H12.1Z M13.7 12 L15.3 9.8 H12.1Z M19 6.4 L16.8 4.8 V8Z M9 6.4 L11 4.8 V8Z" fill="#222"/></svg>
<span class="t" style="left:1895.5px;top:331px;font-size:16px;line-height:20px;color:#1a1a1a;transform:rotate(90deg);transform-origin:0 0;">变换</span>
<svg style="left:1875px;top:391px;" width="22" height="22" viewBox="0 0 22 22"><defs><radialGradient id="sph" cx=".4" cy=".35" r=".7"><stop offset="0" stop-color="#fff"/><stop offset=".6" stop-color="#ececf2"/><stop offset="1" stop-color="#7a7a90"/></radialGradient></defs><circle cx="10.3" cy="10.3" r="8" fill="url(#sph)" stroke="#999" stroke-width=".6"/><path d="M3 14.5 q7.3 7 14.6 0" stroke="#4a465a" fill="none" stroke-width="1.8"/><circle cx="18" cy="6" r=".9" fill="#111"/><circle cx="18" cy="15" r=".9" fill="#111"/></svg>
<span class="t" style="left:1895.5px;top:415px;font-size:16px;line-height:20px;color:#1a1a1a;transform:rotate(90deg);transform-origin:0 0;">透镜</span>
<svg style="left:1875px;top:475px;" width="22" height="22" viewBox="0 0 22 22"><defs><linearGradient id="mg" x1="0" y1="0" x2="0" y2="1"><stop offset=".5" stop-color="#fff"/><stop offset=".55" stop-color="#d4d2e4"/><stop offset="1" stop-color="#f4f4fa"/></linearGradient></defs><circle cx="8.6" cy="8.6" r="5.8" fill="url(#mg)" stroke="#8a889a" stroke-width="1"/><path d="M3.5 11.5 q5 5 10 1" stroke="#4a465a" fill="none" stroke-width="1.4"/><path d="M13 12.5 L17.5 17.5" stroke="#3a3650" stroke-width="2.6"/></svg>
<span class="t" style="left:1895.5px;top:496px;font-size:16px;line-height:20px;color:#1a1a1a;transform:rotate(90deg);transform-origin:0 0;">视图管理器</span>
<svg style="left:1876px;top:625px;" width="20" height="20" viewBox="0 0 20 20"><circle cx="10" cy="10" r="8.5" fill="none" stroke="#d2d2d2" stroke-width="1.3"/><rect x="6.5" y="5.5" width="7" height="9" fill="none" stroke="#d2d2d2" stroke-width="1.2"/></svg>
<svg style="left:1900px;top:141px;" width="18" height="6" viewBox="0 0 18 6"><path d="M2 3.5 H18" stroke="#c0c0c0" stroke-dasharray="1 3"/></svg>
<svg style="left:1904px;top:150px;" width="9" height="14" viewBox="0 0 9 14"><path d="M1.5 1 L7.5 7 L1.5 13Z" fill="#000"/></svg>
<svg style="left:1899px;top:168px;" width="20" height="20" viewBox="0 0 20 20"><path d="M14.5 2.2 a2.4 2.4 0 0 1 3.3 3.3 L15.8 7.6 L12.4 4.2Z" fill="#c9c9c9"/><path d="M11 4.5 L15.5 9" stroke="#c9c9c9" stroke-width="2.4"/><path d="M12 6.5 L5 13.5 L3.5 16.5 L6.5 15 L13.5 8Z" fill="#d5d5d5"/></svg>
<svg style="left:1904px;top:190px;" width="10" height="15" viewBox="0 0 10 15"><rect x="1.5" y="1.5" width="7" height="11" fill="none" stroke="#d6d6d6"/></svg>
<svg style="left:1898.5px;top:207.5px;" width="22" height="734" viewBox="0 0 22 734"><rect x="0" y="0.00" width="22" height="21.17" fill="#000000"/><rect x="0" y="20.97" width="22" height="21.17" fill="#1a1a1a"/><rect x="0" y="41.94" width="22" height="21.17" fill="#333333"/><rect x="0" y="62.91" width="22" height="21.17" fill="#4d4d4d"/><rect x="0" y="83.89" width="22" height="21.17" fill="#666666"/><rect x="0" y="104.86" width="22" height="21.17" fill="#808080"/><rect x="0" y="125.83" width="22" height="21.17" fill="#999999"/><rect x="0" y="146.80" width="22" height="21.17" fill="#b3b3b3"/><rect x="0" y="167.77" width="22" height="21.17" fill="#cccccc"/><rect x="0" y="188.74" width="22" height="21.17" fill="#e6e6e6"/><rect x="0" y="209.71" width="22" height="21.17" fill="#ffffff"/><rect x="0" y="230.69" width="22" height="21.17" fill="#0000ff"/><rect x="0" y="251.66" width="22" height="21.17" fill="#00ffff"/><rect x="0" y="272.63" width="22" height="21.17" fill="#00ff00"/><rect x="0" y="293.60" width="22" height="21.17" fill="#ffff00"/><rect x="0" y="314.57" width="22" height="21.17" fill="#ff0000"/><rect x="0" y="335.54" width="22" height="21.17" fill="#ff00ff"/><rect x="0" y="356.51" width="22" height="21.17" fill="#9900cc"/><rect x="0" y="377.49" width="22" height="21.17" fill="#ff6600"/><rect x="0" y="398.46" width="22" height="21.17" fill="#ff99cc"/><rect x="0" y="419.43" width="22" height="21.17" fill="#663333"/><rect x="0" y="440.40" width="22" height="21.17" fill="#ccccff"/><rect x="0" y="461.37" width="22" height="21.17" fill="#9999ff"/><rect x="0" y="482.34" width="22" height="21.17" fill="#6699ff"/><rect x="0" y="503.31" width="22" height="21.17" fill="#6666ff"/><rect x="0" y="524.29" width="22" height="21.17" fill="#6666cc"/><rect x="0" y="545.26" width="22" height="21.17" fill="#003399"/><rect x="0" y="566.23" width="22" height="21.17" fill="#000080"/><rect x="0" y="587.20" width="22" height="21.17" fill="#336699"/><rect x="0" y="608.17" width="22" height="21.17" fill="#00ccff"/><rect x="0" y="629.14" width="22" height="21.17" fill="#99ffff"/><rect x="0" y="650.11" width="22" height="21.17" fill="#99cccc"/><rect x="0" y="671.09" width="22" height="21.17" fill="#669999"/><rect x="0" y="692.06" width="22" height="21.17" fill="#336666"/><rect x="0" y="713.03" width="22" height="21.17" fill="#003333"/><path d="M0 20.97 H22" stroke="#000" stroke-opacity=".45" stroke-width=".9"/><path d="M0 41.94 H22" stroke="#000" stroke-opacity=".45" stroke-width=".9"/><path d="M0 62.91 H22" stroke="#000" stroke-opacity=".45" stroke-width=".9"/><path d="M0 83.89 H22" stroke="#000" stroke-opacity=".45" stroke-width=".9"/><path d="M0 104.86 H22" stroke="#000" stroke-opacity=".45" stroke-width=".9"/><path d="M0 125.83 H22" stroke="#000" stroke-opacity=".45" stroke-width=".9"/><path d="M0 146.80 H22" stroke="#000" stroke-opacity=".45" stroke-width=".9"/><path d="M0 167.77 H22" stroke="#000" stroke-opacity=".45" stroke-width=".9"/><path d="M0 188.74 H22" stroke="#000" stroke-opacity=".45" stroke-width=".9"/><path d="M0 209.71 H22" stroke="#000" stroke-opacity=".45" stroke-width=".9"/><path d="M0 230.69 H22" stroke="#000" stroke-opacity=".45" stroke-width=".9"/><path d="M0 251.66 H22" stroke="#000" stroke-opacity=".45" stroke-width=".9"/><path d="M0 272.63 H22" stroke="#000" stroke-opacity=".45" stroke-width=".9"/><path d="M0 293.60 H22" stroke="#000" stroke-opacity=".45" stroke-width=".9"/><path d="M0 314.57 H22" stroke="#000" stroke-opacity=".45" stroke-width=".9"/><path d="M0 335.54 H22" stroke="#000" stroke-opacity=".45" stroke-width=".9"/><path d="M0 356.51 H22" stroke="#000" stroke-opacity=".45" stroke-width=".9"/><path d="M0 377.49 H22" stroke="#000" stroke-opacity=".45" stroke-width=".9"/><path d="M0 398.46 H22" stroke="#000" stroke-opacity=".45" stroke-width=".9"/><path d="M0 419.43 H22" stroke="#000" stroke-opacity=".45" stroke-width=".9"/><path d="M0 440.40 H22" stroke="#000" stroke-opacity=".45" stroke-width=".9"/><path d="M0 461.37 H22" stroke="#000" stroke-opacity=".45" stroke-width=".9"/><path d="M0 482.34 H22" stroke="#000" stroke-opacity=".45" stroke-width=".9"/><path d="M0 503.31 H22" stroke="#000" stroke-opacity=".45" stroke-width=".9"/><path d="M0 524.29 H22" stroke="#000" stroke-opacity=".45" stroke-width=".9"/><path d="M0 545.26 H22" stroke="#000" stroke-opacity=".45" stroke-width=".9"/><path d="M0 566.23 H22" stroke="#000" stroke-opacity=".45" stroke-width=".9"/><path d="M0 587.20 H22" stroke="#000" stroke-opacity=".45" stroke-width=".9"/><path d="M0 608.17 H22" stroke="#000" stroke-opacity=".45" stroke-width=".9"/><path d="M0 629.14 H22" stroke="#000" stroke-opacity=".45" stroke-width=".9"/><path d="M0 650.11 H22" stroke="#000" stroke-opacity=".45" stroke-width=".9"/><path d="M0 671.09 H22" stroke="#000" stroke-opacity=".45" stroke-width=".9"/><path d="M0 692.06 H22" stroke="#000" stroke-opacity=".45" stroke-width=".9"/><path d="M0 713.03 H22" stroke="#000" stroke-opacity=".45" stroke-width=".9"/><path d="M0.3 0 V734" stroke="#000" stroke-opacity=".5" stroke-width="1"/></svg>
<svg style="left:1904px;top:947px;" width="10" height="15" viewBox="0 0 10 15"><rect x="1.5" y="1.5" width="7" height="11" fill="none" stroke="#d0d0d0"/></svg>
<svg style="left:1902px;top:967px;" width="14" height="12" viewBox="0 0 14 12"><path d="M2 2 L6 6 L2 10 M7 2 L11 6 L7 10" fill="none" stroke="#c4c4c4" stroke-width="1.4"/></svg>
<svg style="left:480px;top:590px;" width="920" height="60" viewBox="0 0 920 60"><defs><linearGradient id="lg" x1="0" y1="0" x2="0" y2="1"><stop offset="0" stop-color="#fff"/><stop offset=".45" stop-color="#d4d4d0"/><stop offset=".8" stop-color="#7a7674"/><stop offset="1" stop-color="#3a3434"/></linearGradient></defs><rect x="368.5" y="12.5" width="100" height="31" fill="#fdfdfd" stroke="#ebebeb"/><path d="M375 17.5 H462 M426.5 13 V43 M412.5 20 V42 M418.5 20 V42" stroke="#f0f0f0"/><path d="M469.5 19 V44" stroke="#8a8a8a" stroke-width="2"/><path d="M47 44.6 C250 40.5 360 38.6 445 38.6 C560 38.6 700 40.5 875 44.6 Z" fill="url(#lg)"/><path d="M5.5 44.6 H912.5" stroke="#e4505c" stroke-width="1.1"/><path d="M39.5 42.5 L43.5 46.5 M43.5 42.5 L39.5 46.5" stroke="#111" stroke-width="1"/><path d="M424 20 q3 -8 6 0 M436 20 q3 -8 6 0" stroke="#c9cdf0" fill="none"/><path d="M438 26.8 H450" stroke="#1f2a8c" stroke-width="1.6"/><path d="M426.5 22 V28" stroke="#e8e870"/><rect x="437" y="30" width="15" height="15" fill="#fff" stroke="#111" stroke-width="1"/><path d="M438.2 30.8 H450.8 L450.5 43 Q444.5 45.5 438.5 43Z" fill="#333"/><path d="M441 31 H448" stroke="#ddd"/><rect x="438.5" y="45.5" width="12" height="7.5" fill="#fff" stroke="#111" stroke-width="1.2"/><path d="M459.5 35.5 H461.5 V41 H458.5" fill="none" stroke="#222" stroke-width="1"/><path d="M452 29.5 H455 L458 33" fill="none" stroke="#333" stroke-width=".8"/></svg>
<svg style="left:1400px;top:925px;" width="445" height="110" viewBox="0 0 445 110"><path d="M16 30 L20 44 L26 68 Q34 80 52 90 Q80 101 110 97 Q150 88 190 85 Q230 82 280 76 Q330 70 370 68 Q395 62 410 50 Q430 36 441 20 L441 0 L20 0 Z" fill="#fff" filter="url(#bb)"/><defs><filter id="bb" x="-5%" y="-10%" width="110%" height="120%"><feGaussianBlur stdDeviation="1.2"/></filter></defs></svg>
<span class="t" style="left:1816px;top:971px;font-size:16px;line-height:20px;color:#d4d4d4;">»</span>
<svg style="left:1829px;top:955px;" width="8" height="8" viewBox="0 0 8 8"><path d="M2 1 L7 7 L4 7Z" fill="#333"/></svg>
<div style="left:144px;top:56px;width:1px;height:31px;background:#dedede;"></div>
<div style="left:145px;top:56px;width:1px;height:31px;background:#fbfbfb;"></div>
<div style="left:257px;top:56px;width:1px;height:31px;background:#dedede;"></div>
<div style="left:258px;top:56px;width:1px;height:31px;background:#fbfbfb;"></div>
<div style="left:369px;top:56px;width:1px;height:31px;background:#dedede;"></div>
<div style="left:370px;top:56px;width:1px;height:31px;background:#fbfbfb;"></div>
<div style="left:412px;top:56px;width:1px;height:31px;background:#dedede;"></div>
<div style="left:413px;top:56px;width:1px;height:31px;background:#fbfbfb;"></div>
<div style="left:524px;top:56px;width:1px;height:31px;background:#dedede;"></div>
<div style="left:525px;top:56px;width:1px;height:31px;background:#fbfbfb;"></div>
<div style="left:678px;top:56px;width:1px;height:31px;background:#dedede;"></div>
<div style="left:679px;top:56px;width:1px;height:31px;background:#fbfbfb;"></div>
<div style="left:791px;top:56px;width:1px;height:31px;background:#dedede;"></div>
<div style="left:792px;top:56px;width:1px;height:31px;background:#fbfbfb;"></div>
<div style="left:881px;top:56px;width:1px;height:31px;background:#dedede;"></div>
<div style="left:882px;top:56px;width:1px;height:31px;background:#fbfbfb;"></div>
<div style="left:959px;top:56px;width:1px;height:31px;background:#dedede;"></div>
<div style="left:960px;top:56px;width:1px;height:31px;background:#fbfbfb;"></div>
<svg style="left:10px;top:63px;" width="16" height="17" viewBox="0 0 16 17"><path d="M1.5 6.5 L5.5 2.5 H11.5 V15.5 H1.5Z" fill="#f2f2f2" stroke="#7d7d85" stroke-width="1.2"/><path d="M2 11 H11" stroke="#d8d8d8" stroke-width="3"/><circle cx="11.5" cy="4" r="3" fill="#2f9e3a"/></svg>
<svg style="left:45px;top:65px;" width="16" height="15" viewBox="0 0 16 15"><path d="M1 13.5 V1.5 H6 L7.5 3.5 H12.5 V6" fill="#2c3062" stroke="#2c3062"/><path d="M1.2 13.8 L3.5 6.5 H15 L12.5 13.8Z" fill="#e4e6ea" stroke="#6d7088" stroke-width="1"/></svg>
<svg style="left:81px;top:66px;" width="14" height="14" viewBox="0 0 14 14"><path d="M1 1 H11 L13 3 V13 H1Z" fill="#2c3062"/><rect x="3.5" y="1.5" width="6.5" height="4" fill="#f4f4f8"/><rect x="3.5" y="8" width="7" height="5" fill="#8a8fb5"/><rect x="5" y="9" width="2" height="4" fill="#fff"/></svg>
<svg style="left:115px;top:63px;" width="16" height="17" viewBox="0 0 16 17"><rect x="4.5" y="1.5" width="7" height="8" fill="#fcfcff" stroke="#b9c3d6"/><path d="M1.5 9.5 H14.5 V15.5 H1.5Z" fill="#f0f0f0" stroke="#2a2a2a" stroke-width="1.3"/><path d="M3 10.5 H13" stroke="#111" stroke-width="1.6"/></svg>
<svg style="left:157px;top:64px;" width="18" height="15" viewBox="0 0 18 15"><circle cx="3.8" cy="4" r="2.6" fill="none" stroke="#4a4a52" stroke-width="1.6"/><circle cx="3.8" cy="11" r="2.6" fill="none" stroke="#4a4a52" stroke-width="1.6"/><path d="M6 5.2 L17 12.5 M6 9.8 L17 2.5" stroke="#4a4a52" stroke-width="1.8"/></svg>
<svg style="left:193px;top:65px;" width="16" height="16" viewBox="0 0 16 16"><rect x="1.5" y="1.5" width="8" height="10" fill="#fafafa" stroke="#c2c6d0"/><path d="M3 4.5 H8 M3 6.5 H8 M3 8.5 H8" stroke="#d5d8e0"/><rect x="6.5" y="4.5" width="8" height="10.5" fill="#fff" stroke="#5a5f80" stroke-width="1.1"/><path d="M8.5 8 H12.5 M8.5 10.5 H12.5 M8.5 13 H12.5" stroke="#33375e" stroke-width=".9"/></svg>
<svg style="left:228px;top:64px;" width="16" height="17" viewBox="0 0 16 17"><rect x="1.5" y="3" width="9.5" height="11.5" fill="#6b4a32" stroke="#4a3222"/><path d="M4 3.5 a2.2 2.2 0 0 1 4.5 0Z" fill="#ddd" stroke="#555" stroke-width=".8"/><rect x="6.5" y="7" width="8" height="9" fill="#fff" stroke="#5a5f80" stroke-width="1.1"/><path d="M8.5 9.5 H12.5 M8.5 11.5 H12.5 M8.5 13.5 H12.5" stroke="#33375e" stroke-width=".9"/></svg>
<svg style="left:271px;top:63px;" width="17" height="17" viewBox="0 0 17 17"><path d="M7.5 0.5 L1 6 L7.5 11.5 V8 C11 7.6 12.3 9.8 10 14.5 L12.5 15.5 C17 8.5 13 3.6 7.5 4 Z" fill="#4b4b58"/></svg>
<svg style="left:298px;top:70px;" width="9" height="6" viewBox="0 0 9 6"><path d="M0.5 0.8 H8.5 L4.5 5.2Z" fill="#000"/></svg>
<svg style="left:322px;top:63px;" width="17" height="17" viewBox="0 0 17 17"><path d="M7.5 0.5 L1 6 L7.5 11.5 V8 C11 7.6 12.3 9.8 10 14.5 L12.5 15.5 C17 8.5 13 3.6 7.5 4 Z" fill="#c6c6c6" transform="translate(17,0) scale(-1,1)"/></svg>
<svg style="left:350px;top:70px;" width="9" height="6" viewBox="0 0 9 6"><path d="M0.5 0.8 H8.5 L4.5 5.2Z" fill="#bdbdbd"/></svg>
<svg style="left:383px;top:64px;" width="16" height="16" viewBox="0 0 16 16"><rect width="16" height="16" fill="#5b2c8a"/><path d="M7 1 H11 L9.5 6 H12 L6 12 L4 15 L2.5 14 L5.5 9 H4.5Z" fill="#fff"/><path d="M11 2 H15 V14 H9 L12 9Z" fill="#47206e"/></svg>
<svg style="left:426px;top:64px;" width="17" height="16" viewBox="0 0 17 16"><rect x="8.5" y="1.5" width="7" height="8" fill="#fdfdfd" stroke="#9aa0b4"/><rect x="0.5" y="8" width="8.5" height="8" fill="#2c3062"/><rect x="2" y="8" width="5" height="3" fill="#e8e8f0"/><rect x="2" y="13" width="5" height="3" fill="#7b80a8"/><path d="M3 4.5 H9" stroke="#c8202a" stroke-width="2"/><path d="M8 1.5 L12 4.5 L8 7.5Z" fill="#c8202a"/></svg>
<svg style="left:461px;top:64px;" width="17" height="16" viewBox="0 0 17 16"><path d="M1.5 9.5 V4 L4.5 1.5 H8.5 V9.5Z" fill="#fdfdfd" stroke="#8a8f9f"/><rect x="8" y="8" width="8.5" height="8" fill="#2c3062"/><rect x="9.5" y="8" width="5" height="3" fill="#e8e8f0"/><rect x="9.5" y="13" width="5" height="3" fill="#7b80a8"/><path d="M5 4.5 H11" stroke="#c8202a" stroke-width="2"/><path d="M10 1.5 L14 4.5 L10 7.5Z" fill="#c8202a"/></svg>
<svg style="left:495px;top:64px;" width="18" height="16" viewBox="0 0 18 16"><path d="M2.5 0.5 H9 L12.5 4 V15.5 H2.5Z" fill="#fdfdfd" stroke="#777b90"/><rect x="1" y="6" width="12" height="6.5" fill="#1d1f33"/><path d="M12.5 5 L17 9.2 L12.5 13.5Z" fill="#1d1f33"/><text x="2" y="11.6" font-size="6.2" font-weight="bold" fill="#fff" textLength="10">PDF</text></svg>
<div style="left:532px;top:57px;width:105px;height:28px;background:#fff;border:1px solid #c6c6c6;box-sizing:border-box;"></div>
<span class="t" style="left:537px;top:60px;font-size:14px;line-height:22px;color:#1a1a1a;">128%</span>
<svg style="left:618px;top:66px;" width="14" height="10" viewBox="0 0 14 10"><path d="M1.5 1.5 L7 7 L12.5 1.5" fill="none" stroke="#333" stroke-width="1.8"/></svg>
<svg style="left:648px;top:64px;" width="17" height="17" viewBox="0 0 17 17"><rect x="1" y="1" width="15" height="12.5" fill="#a9d3ea" stroke="#2c3a52" stroke-width="1.2"/><path d="M3 7.2 H14 M8.5 3 V11.5" stroke="#0f1a30" stroke-width="1.5"/><path d="M4.3 5.2 L2.3 7.2 L4.3 9.2 M12.7 5.2 L14.7 7.2 L12.7 9.2 M6.5 4.6 L8.5 2.6 L10.5 4.6 M6.5 9.8 L8.5 11.8 L10.5 9.8" fill="none" stroke="#0f1a30" stroke-width="1.1"/><path d="M4 15.5 H13" stroke="#6a7a8a" stroke-width="1.2"/></svg>
<div style="left:685px;top:57px;width:30px;height:30px;background:#fff;border:1px solid #c9c9c9;box-sizing:border-box;"></div>
<svg style="left:691px;top:63px;" width="18" height="18" viewBox="0 0 18 18"><path d="M1.5 1.5 H16 V6 H6 V16.5 H1.5Z" fill="#c9cde6" stroke="#7a7f9e"/><path d="M8 2 V4 M10.5 2 V4 M13 2 V4 M2 8 H4 M2 10.5 H4 M2 13 H4" stroke="#7a7f9e" stroke-width=".8"/></svg>
<svg style="left:724px;top:62px;" width="22" height="20" viewBox="0 0 22 20"><path d="M1 4.5 H18 M1 7.5 H18 M1 10.5 H8 M1 13.5 H6 M3.5 2 V16 M6.5 2 V15 M9.5 2 V9 M12.5 2 V8 M15.5 2 V8" stroke="#9a9aa6" stroke-dasharray="1.6 .7"/><path d="M7 13.5 Q13.5 6.5 20 13.5 Q13.5 19.5 7 13.5Z" fill="#fff" stroke="#333" stroke-width="1.3"/><circle cx="13.5" cy="13.2" r="2.6" fill="#3a3a44"/></svg>
<div style="left:755px;top:57px;width:30px;height:30px;background:#fff;border:1px solid #c9c9c9;box-sizing:border-box;"></div>
<svg style="left:761px;top:64px;" width="20" height="20" viewBox="0 0 20 20"><path d="M2 6.5 H17 M6.5 1 V16" stroke="#222" stroke-dasharray="1.2 1.2"/><path d="M7.5 12 Q12.5 6.5 17.5 12 Q12.5 17 7.5 12Z" fill="#e4e4ea" stroke="#999" stroke-width=".8"/><circle cx="12.5" cy="12" r="2.2" fill="#555"/></svg>
<span class="t" style="left:803px;top:61px;font-size:16px;line-height:22px;color:#1a1a1a;">贴齐<span style="letter-spacing:-1px">(T)</span></span>
<svg style="left:862px;top:70px;" width="9" height="6" viewBox="0 0 9 6"><path d="M0.5 0.8 H8.5 L4.5 5.2Z" fill="#000"/></svg>
<svg style="left:894px;top:65px;" width="17" height="16" viewBox="0 0 17 16"><rect x="1.5" y="1.5" width="14" height="13" fill="#eef0fa" stroke="#6a6f96" stroke-width="1.2"/><path d="M2 3.5 H15" stroke="#6a6f96" stroke-width="1.6"/><path d="M3.5 13 V8 L6 10 L9 7 V13Z" fill="#3b3f7a"/><rect x="10" y="6" width="4" height="5" fill="#fff" stroke="#8a8fb0" stroke-width=".8"/></svg>
<svg style="left:930px;top:63px;" width="17" height="17" viewBox="0 0 17 17"><path d="M6.5 3.5 H15.5 M6.5 8.5 H15.5 M6.5 13.5 H15.5" stroke="#888" stroke-width="1.2"/><path d="M1 3.5 L2.8 5.2 L5.8 1.2 M1 8.5 L2.8 10.2 L5.8 6.2 M1 13.5 L2.8 15.2 L5.8 11.2" fill="none" stroke="#3f8a3a" stroke-width="1.3"/></svg>
<svg style="left:972px;top:63px;" width="18" height="18" viewBox="0 0 18 18"><rect x="1.5" y="1.5" width="14" height="9" fill="#dfe3ee" stroke="#555a70"/><path d="M1 2.5 H16" stroke="#1a1c2e" stroke-width="2.6"/><path d="M8.5 10 L12 16 L8.5 14.5 L5 16Z" fill="#d92a1c"/><circle cx="8.5" cy="15" r="1.4" fill="#f2a33a"/></svg>
<svg style="left:1000px;top:70px;" width="9" height="6" viewBox="0 0 9 6"><path d="M0.5 0.8 H8.5 L4.5 5.2Z" fill="#000"/></svg>
<div style="left:214px;top:94px;width:1px;height:41px;background:#dedede;"></div>
<div style="left:215px;top:94px;width:1px;height:41px;background:#fbfbfb;"></div>
<div style="left:350px;top:94px;width:1px;height:41px;background:#dedede;"></div>
<div style="left:351px;top:94px;width:1px;height:41px;background:#fbfbfb;"></div>
<div style="left:423px;top:94px;width:1px;height:41px;background:#dedede;"></div>
<div style="left:424px;top:94px;width:1px;height:41px;background:#fbfbfb;"></div>
<div style="left:571px;top:94px;width:1px;height:41px;background:#dedede;"></div>
<div style="left:572px;top:94px;width:1px;height:41px;background:#fbfbfb;"></div>
<div style="left:799px;top:94px;width:1px;height:41px;background:#dedede;"></div>
<div style="left:800px;top:94px;width:1px;height:41px;background:#fbfbfb;"></div>
<div style="left:910px;top:94px;width:1px;height:41px;background:#dedede;"></div>
<div style="left:911px;top:94px;width:1px;height:41px;background:#fbfbfb;"></div>
<div style="left:1023px;top:94px;width:1px;height:41px;background:#dedede;"></div>
<div style="left:1024px;top:94px;width:1px;height:41px;background:#fbfbfb;"></div>
<div style="left:1066px;top:94px;width:1px;height:41px;background:#dedede;"></div>
<div style="left:1067px;top:94px;width:1px;height:41px;background:#fbfbfb;"></div>
<div style="left:1109px;top:94px;width:1px;height:41px;background:#dedede;"></div>
<div style="left:1110px;top:94px;width:1px;height:41px;background:#fbfbfb;"></div>
<div style="left:1152px;top:94px;width:1px;height:41px;background:#dedede;"></div>
<div style="left:1153px;top:94px;width:1px;height:41px;background:#fbfbfb;"></div>
<div style="left:1195px;top:94px;width:1px;height:41px;background:#dedede;"></div>
<div style="left:1196px;top:94px;width:1px;height:41px;background:#fbfbfb;"></div>
<svg style="left:10px;top:107px;" width="16" height="16" viewBox="0 0 16 16"><rect x="1.5" y="1.5" width="13" height="13" fill="#f4f4f6" stroke="#8c8c96"/><path d="M3.5 3.5 L12.5 12.5 M12.5 3.5 L3.5 12.5" stroke="#23233a" stroke-width="1.5"/></svg>
<div style="left:76px;top:93px;width:28px;height:41px;background:#fff;"></div>
<div style="left:77px;top:99px;width:26px;height:1px;background:#9a9a9a;"></div>
<div style="left:77px;top:129px;width:26px;height:1px;background:#9a9a9a;"></div>
<svg style="left:45px;top:107px;" width="16" height="16" viewBox="0 0 16 16"><defs><linearGradient id="tg45" x1="1" y1="0" x2="0" y2="1"><stop offset="0" stop-color="#fff"/><stop offset="1" stop-color="#9a9aa8"/></linearGradient></defs><rect x="0" y="1" width="15" height="15" fill="#25253a"/><rect x="7.5" y="0.5" width="8" height="8" fill="url(#tg45)" stroke="#c8c8d0"/><rect x="10" y="2" width="3.5" height="3.5" fill="#fff"/></svg>
<svg style="left:80px;top:107px;" width="16" height="16" viewBox="0 0 16 16"><defs><linearGradient id="tg80" x1="1" y1="0" x2="0" y2="1"><stop offset="0" stop-color="#fff"/><stop offset="1" stop-color="#9a9aa8"/></linearGradient></defs><defs><linearGradient id="fg" x1="0" y1="0" x2=".8" y2="1"><stop offset="0" stop-color="#e8e8ec"/><stop offset="1" stop-color="#2c2c3c"/></linearGradient></defs><rect x="0" y="1" width="15" height="15" fill="url(#fg)"/><rect x="7.5" y="0.5" width="8" height="8" fill="url(#tg80)" stroke="#c8c8d0"/><rect x="10" y="2" width="3.5" height="3.5" fill="#fff"/></svg>
<svg style="left:115px;top:107px;" width="16" height="16" viewBox="0 0 16 16"><defs><linearGradient id="tg115" x1="1" y1="0" x2="0" y2="1"><stop offset="0" stop-color="#fff"/><stop offset="1" stop-color="#9a9aa8"/></linearGradient></defs><rect x="0" y="1" width="15" height="15" fill="#f2f2f6"/><path d="M0 1 H15 V16 H0Z M3 1.5 L5.3 5 L3 8.5 L0.7 5Z M8 1.5 L10.3 5 L8 8.5 L5.7 5Z M3 8.5 L5.3 12 L3 15.5 L0.7 12Z M8 8.5 L10.3 12 L8 15.5 L5.7 12Z M13 8.5 L15 12 L13 15.5 L10.7 12Z" fill="#25253a" fill-rule="evenodd"/><rect x="7.5" y="0.5" width="8" height="8" fill="url(#tg115)" stroke="#c8c8d0"/><rect x="10" y="2" width="3.5" height="3.5" fill="#fff"/></svg>
<svg style="left:150px;top:107px;" width="16" height="16" viewBox="0 0 16 16"><defs><linearGradient id="tg150" x1="1" y1="0" x2="0" y2="1"><stop offset="0" stop-color="#fff"/><stop offset="1" stop-color="#9a9aa8"/></linearGradient></defs><rect x="0" y="1" width="15" height="15" fill="#25253a"/><circle cx="4" cy="11" r="2.6" fill="none" stroke="#c9c9dd" stroke-width="1"/><circle cx="11" cy="12.5" r="2.2" fill="none" stroke="#c9c9dd" stroke-width="1"/><path d="M2 3 q3 1 3 4 M8 9 q2 -3 6 -1" stroke="#c9c9dd" fill="none"/><rect x="7.5" y="0.5" width="8" height="8" fill="url(#tg150)" stroke="#c8c8d0"/><rect x="10" y="2" width="3.5" height="3.5" fill="#fff"/></svg>
<svg style="left:185px;top:107px;" width="16" height="16" viewBox="0 0 16 16"><defs><linearGradient id="tg185" x1="1" y1="0" x2="0" y2="1"><stop offset="0" stop-color="#fff"/><stop offset="1" stop-color="#9a9aa8"/></linearGradient></defs><rect x="0" y="1" width="15" height="15" fill="#e9e9f0"/><rect x="0" y="1" width="7" height="15" fill="#25253a"/><path d="M7 9 H15" stroke="#fff"/><rect x="7.5" y="0.5" width="8" height="8" fill="url(#tg185)" stroke="#c8c8d0"/><rect x="10" y="2" width="3.5" height="3.5" fill="#fff"/></svg>
<svg style="left:199px;top:121px;" width="8" height="8" viewBox="0 0 8 8"><path d="M7 0.5 V7 H0.5Z" fill="#000"/></svg>
<div style="left:221px;top:100px;width:123px;height:28px;background:linear-gradient(#f7f7f7,#e9e9e9);border:1px solid #c4c4c4;box-sizing:border-box;"></div>
<span class="t" style="left:225px;top:103px;font-size:16px;line-height:22px;color:#1a1a1a;">常规</span>
<svg style="left:327px;top:109px;" width="12" height="9" viewBox="0 0 12 9"><path d="M1.5 1.5 L6 6 L10.5 1.5" fill="none" stroke="#444" stroke-width="1.8"/></svg>
<div style="left:357px;top:100px;width:60px;height:30px;background:#f3f3f3;border:1px solid #c6c6c6;box-sizing:border-box;"></div>
<svg style="left:360px;top:103px;" width="38" height="24" viewBox="0 0 38 24"><defs><linearGradient id="cg" x1="0" y1="0" x2="0" y2="1"><stop offset="0" stop-color="#000" stop-opacity="0"/><stop offset=".35" stop-color="#000" stop-opacity=".25"/><stop offset="1" stop-color="#000" stop-opacity=".8"/></linearGradient></defs><rect width="38" height="24" fill="#f6f6f6"/><rect x="-1" y="0" width="4" height="4" fill="#c4c4c4"/><rect x="7" y="0" width="4" height="4" fill="#c4c4c4"/><rect x="15" y="0" width="4" height="4" fill="#c4c4c4"/><rect x="23" y="0" width="4" height="4" fill="#c4c4c4"/><rect x="31" y="0" width="4" height="4" fill="#c4c4c4"/><rect x="3" y="4" width="4" height="4" fill="#c4c4c4"/><rect x="11" y="4" width="4" height="4" fill="#c4c4c4"/><rect x="19" y="4" width="4" height="4" fill="#c4c4c4"/><rect x="27" y="4" width="4" height="4" fill="#c4c4c4"/><rect x="35" y="4" width="4" height="4" fill="#c4c4c4"/><rect x="-1" y="8" width="4" height="4" fill="#c4c4c4"/><rect x="7" y="8" width="4" height="4" fill="#c4c4c4"/><rect x="15" y="8" width="4" height="4" fill="#c4c4c4"/><rect x="23" y="8" width="4" height="4" fill="#c4c4c4"/><rect x="31" y="8" width="4" height="4" fill="#c4c4c4"/><rect x="3" y="12" width="4" height="4" fill="#c4c4c4"/><rect x="11" y="12" width="4" height="4" fill="#c4c4c4"/><rect x="19" y="12" width="4" height="4" fill="#c4c4c4"/><rect x="27" y="12" width="4" height="4" fill="#c4c4c4"/><rect x="35" y="12" width="4" height="4" fill="#c4c4c4"/><rect x="-1" y="16" width="4" height="4" fill="#c4c4c4"/><rect x="7" y="16" width="4" height="4" fill="#c4c4c4"/><rect x="15" y="16" width="4" height="4" fill="#c4c4c4"/><rect x="23" y="16" width="4" height="4" fill="#c4c4c4"/><rect x="31" y="16" width="4" height="4" fill="#c4c4c4"/><rect x="3" y="20" width="4" height="4" fill="#c4c4c4"/><rect x="11" y="20" width="4" height="4" fill="#c4c4c4"/><rect x="19" y="20" width="4" height="4" fill="#c4c4c4"/><rect x="27" y="20" width="4" height="4" fill="#c4c4c4"/><rect x="35" y="20" width="4" height="4" fill="#c4c4c4"/><rect width="38" height="24" fill="url(#cg)"/></svg>
<div style="left:400px;top:101px;width:1px;height:28px;background:#d0d0d0;"></div>
<svg style="left:404px;top:113px;" width="9" height="6" viewBox="0 0 9 6"><path d="M0.5 0.8 H8.5 L4.5 5.2Z" fill="#000"/></svg>
<div style="left:430px;top:100px;width:30px;height:30px;background:#fff;border:1px solid #c9c9c9;box-sizing:border-box;"></div>
<svg style="left:437px;top:108px;" width="16" height="15" viewBox="0 0 16 15"><defs><linearGradient id="g437" x1="0" y1="0" x2="0" y2="1"><stop offset="0" stop-color="#fff"/><stop offset=".3" stop-color="#fafaff"/><stop offset="1" stop-color="#70739c"/></linearGradient></defs><rect x=".75" y=".75" width="14" height="13.5" fill="url(#g437)" stroke="#454a6e" stroke-width="1.3"/></svg>
<svg style="left:472px;top:108px;" width="16" height="15" viewBox="0 0 16 15"><defs><radialGradient id="g472" cx=".5" cy=".5" r=".7"><stop offset="0" stop-color="#fff"/><stop offset="1" stop-color="#8083aa"/></radialGradient></defs><rect x=".75" y=".75" width="14" height="13.5" fill="url(#g472)" stroke="#454a6e" stroke-width="1.3"/></svg>
<svg style="left:507px;top:108px;" width="16" height="15" viewBox="0 0 16 15"><defs><radialGradient id="g507" cx=".2" cy=".5" r=".9"><stop offset="0" stop-color="#4a4d80"/><stop offset=".5" stop-color="#c9cae0"/><stop offset="1" stop-color="#fff"/></radialGradient></defs><rect x=".75" y=".75" width="14" height="13.5" fill="url(#g507)" stroke="#454a6e" stroke-width="1.3"/></svg>
<svg style="left:542px;top:108px;" width="16" height="15" viewBox="0 0 16 15"><defs><radialGradient id="g542" cx=".5" cy=".5" r=".75"><stop offset="0" stop-color="#fff"/><stop offset=".5" stop-color="#f0f0f8"/><stop offset="1" stop-color="#5d6090"/></radialGradient></defs><rect x=".75" y=".75" width="14" height="13.5" fill="url(#g542)" stroke="#454a6e" stroke-width="1.3"/></svg>
<svg style="left:581px;top:107px;" width="11" height="15" viewBox="0 0 11 15"><path d="M1 1 H10 Q10 7 5.5 7.5 Q1 7 1 1Z M5.5 7.5 V12.5 M2 13 H9" fill="none" stroke="#333" stroke-width="1.3"/></svg>
<div style="left:598px;top:100px;width:69px;height:29px;background:#fff;border:1px solid #c6c6c6;box-sizing:border-box;"></div>
<div style="left:645px;top:101px;width:21px;height:27px;background:#ededed;"></div>
<span class="t" style="left:601px;top:104px;font-size:15px;line-height:22px;color:#111;letter-spacing:-.5px;">100</span>
<svg style="left:647px;top:104px;" width="17" height="22" viewBox="0 0 17 22"><path d="M8 1.5 V20 M2 11.5 H15" stroke="#111" stroke-width="1.4"/></svg>
<span class="t" style="left:669px;top:104px;font-size:15px;line-height:22px;color:#111;">%</span>
<svg style="left:690px;top:108px;" width="15" height="13" viewBox="0 0 15 13"><path d="M2 8.5 H13 M5 6.5 H10 V10.5 H5Z" stroke="#c9c9c9" fill="none" stroke-width="1.2"/><path d="M6 2 H9 M7.5 1 V4" stroke="#d2d2d2"/></svg>
<div style="left:708px;top:100px;width:69px;height:29px;background:#f0f0f0;border:1px solid #dedede;box-sizing:border-box;"></div>
<span class="t" style="left:711px;top:104px;font-size:15px;line-height:22px;color:#ababab;">0</span>
<svg style="left:757px;top:104px;" width="17" height="22" viewBox="0 0 17 22"><path d="M8 1.5 V20 M2 11.5 H15" stroke="#c2c2c2" stroke-width="1.3"/></svg>
<span class="t" style="left:779px;top:104px;font-size:15px;line-height:22px;color:#a5a5a5;">%</span>
<div style="left:806px;top:100px;width:98px;height:30px;background:#fff;border:1px solid #c0c0c0;box-sizing:border-box;"></div>
<span class="t" style="left:810px;top:104px;font-size:15px;line-height:22px;color:#111;">-90.0 °</span>
<div style="left:881px;top:102px;width:21px;height:12px;background:#efefef;border:1px solid #c4c4c4;box-sizing:border-box;"></div>
<div style="left:881px;top:116px;width:21px;height:12px;background:#efefef;border:1px solid #c4c4c4;box-sizing:border-box;"></div>
<svg style="left:887px;top:105px;" width="9" height="6" viewBox="0 0 9 6"><path d="M0.5 5.2 H8.5 L4.5 0.8Z" fill="#000"/></svg>
<svg style="left:887px;top:119px;" width="9" height="6" viewBox="0 0 9 6"><path d="M0.5 0.8 H8.5 L4.5 5.2Z" fill="#000"/></svg>
<div style="left:917px;top:100px;width:30px;height:30px;background:#fff;border:1px solid #c9c9c9;box-sizing:border-box;"></div>
<svg style="left:924px;top:107px;" width="16" height="16" viewBox="0 0 16 16"><g filter="url(#bl)"><rect x="0" y="0" width="4" height="4" fill="#9d9da8"/><rect x="4" y="0" width="4" height="4" fill="#7d7d8a"/><rect x="8" y="0" width="4" height="4" fill="#a9a9b4"/><rect x="12" y="0" width="4" height="4" fill="#8a8a96"/><rect x="0" y="4" width="4" height="4" fill="#c9c9d0"/><rect x="4" y="4" width="4" height="4" fill="#9d9da8"/><rect x="8" y="4" width="4" height="4" fill="#b9b9c2"/><rect x="12" y="4" width="4" height="4" fill="#7d7d8a"/><rect x="0" y="8" width="4" height="4" fill="#e4e4e8"/><rect x="4" y="8" width="4" height="4" fill="#c2c2ca"/><rect x="8" y="8" width="4" height="4" fill="#8a8a96"/><rect x="12" y="8" width="4" height="4" fill="#a9a9b4"/><rect x="0" y="12" width="4" height="4" fill="#f0f0f2"/><rect x="4" y="12" width="4" height="4" fill="#dcdce0"/><rect x="8" y="12" width="4" height="4" fill="#b0b0ba"/><rect x="12" y="12" width="4" height="4" fill="#9a9aa6"/></g><defs><filter id="bl"><feGaussianBlur stdDeviation=".5"/></filter></defs></svg>
<svg style="left:958px;top:107px;" width="17" height="16" viewBox="0 0 17 16"><path d="M1 1 H16.5 V15.5 H9.5 V8 H1Z" fill="#1f1f3a"/><rect x="2" y="9" width="6" height="6" fill="#d6d6de"/><rect x="2" y="9" width="3" height="3" fill="#a9a9b8"/><rect x="5" y="12" width="3" height="3" fill="#a9a9b8"/></svg>
<svg style="left:994px;top:107px;" width="16" height="16" viewBox="0 0 16 16"><g filter="url(#bl)"><rect x="0" y="0" width="4" height="4" fill="#8a8a96"/><rect x="4" y="0" width="4" height="4" fill="#7d7d8a"/><rect x="8" y="0" width="4" height="4" fill="#9d9da8"/><rect x="12" y="0" width="4" height="4" fill="#8a8a96"/><rect x="0" y="4" width="4" height="4" fill="#a9a9b4"/><rect x="4" y="4" width="4" height="4" fill="#c2c2ca"/><rect x="8" y="4" width="4" height="4" fill="#9d9da8"/><rect x="12" y="4" width="4" height="4" fill="#b0b0ba"/><rect x="0" y="8" width="4" height="4" fill="#d0d0d8"/><rect x="4" y="8" width="4" height="4" fill="#c9c9d0"/><rect x="8" y="8" width="4" height="4" fill="#8a8a96"/><rect x="12" y="8" width="4" height="4" fill="#a9a9b4"/><rect x="0" y="12" width="4" height="4" fill="#dcdce0"/><rect x="4" y="12" width="4" height="4" fill="#d0d0d8"/><rect x="8" y="12" width="4" height="4" fill="#b0b0ba"/><rect x="12" y="12" width="4" height="4" fill="#9a9aa6"/></g><defs><filter id="bl"><feGaussianBlur stdDeviation=".5"/></filter></defs></svg>
<div style="left:1030px;top:100px;width:30px;height:30px;background:#fff;border:1px solid #c9c9c9;box-sizing:border-box;"></div>
<svg style="left:1037px;top:107px;" width="16" height="16" viewBox="0 0 16 16"><path d="M2.5 3.5 H12.5 L9.5 11.5 H1 L4 3.5" fill="none" stroke="#2a2a3a" stroke-width="1.4"/><path d="M2 1.5 L5 4.5 M10 10.5 L14 14" stroke="#2a2a3a" stroke-width="1.6"/><path d="M11 3.5 L14.5 2" stroke="#2a2a3a" stroke-width="1.2"/></svg>
<svg style="left:1079px;top:107px;" width="17" height="17" viewBox="0 0 17 17"><path d="M1.00 8.50 L16.00 8.50" stroke="#b4b4cc" stroke-width="1"/><path d="M1.57 5.63 L15.43 11.37" stroke="#b4b4cc" stroke-width="1"/><path d="M3.20 3.20 L13.80 13.80" stroke="#b4b4cc" stroke-width="1"/><path d="M5.63 1.57 L11.37 15.43" stroke="#b4b4cc" stroke-width="1"/><path d="M8.50 1.00 L8.50 16.00" stroke="#b4b4cc" stroke-width="1"/><path d="M11.37 1.57 L5.63 15.43" stroke="#b4b4cc" stroke-width="1"/><path d="M13.80 3.20 L3.20 13.80" stroke="#b4b4cc" stroke-width="1"/><path d="M15.43 5.63 L1.57 11.37" stroke="#b4b4cc" stroke-width="1"/><circle cx="8.5" cy="8.5" r="2" fill="#9a9ab8"/></svg>
<svg style="left:1123px;top:106px;" width="17" height="18" viewBox="0 0 17 18"><rect x="1.5" y="1.5" width="6" height="6" fill="#fff" stroke="#333" stroke-width="1.2"/><rect x="9.5" y="8.5" width="5.5" height="7" fill="#fff" stroke="#333" stroke-width="1.2"/><path d="M9 2.5 H13 V6 M11.5 5 L13 6.8 L14.5 5" fill="none" stroke="#333" stroke-width="1.1"/><rect x="7" y="12" width="4" height="4.5" fill="#fff" stroke="#333" stroke-width="1"/></svg>
<svg style="left:1165px;top:106px;" width="18" height="18" viewBox="0 0 18 18"><path d="M1.5 2 H8.5 Q8.5 7 5 7.5 Q1.5 7 1.5 2Z M5 7.5 V12.5 M2.5 13 H8" fill="none" stroke="#333" stroke-width="1.2"/><path d="M9 3.5 H16.5 V12.5 H9.5" fill="none" stroke="#333" stroke-width="1.2"/><path d="M11 6 H14.5 M11 8 H14.5 M11 10 H14.5" stroke="#555" stroke-width=".9"/><path d="M6 16 H12" stroke="#333" stroke-width="1.4"/></svg>
<svg style="left:1212px;top:104px;" width="22" height="22" viewBox="0 0 22 22"><circle cx="11" cy="11" r="9.5" fill="none" stroke="#d0d0d0" stroke-width="1.4"/><rect x="7" y="5.5" width="8" height="11" rx="1" fill="none" stroke="#d0d0d0" stroke-width="1.3"/></svg>
<div style="left:35px;top:140px;width:1px;height:852px;background:#dadada;"></div>
<div style="left:0px;top:214px;width:32px;height:1px;background:#dcdcdc;"></div>
<div style="left:0px;top:292px;width:32px;height:1px;background:#dcdcdc;"></div>
<div style="left:0px;top:475px;width:32px;height:1px;background:#dcdcdc;"></div>
<div style="left:0px;top:518px;width:32px;height:1px;background:#dcdcdc;"></div>
<div style="left:0px;top:596px;width:32px;height:1px;background:#dcdcdc;"></div>
<div style="left:0px;top:786px;width:32px;height:1px;background:#dcdcdc;"></div>
<svg style="left:24px;top:163px;" width="8" height="8" viewBox="0 0 8 8"><path d="M7.5 0.5 V7.5 H0.5Z" fill="#000"/></svg>
<svg style="left:24px;top:199px;" width="8" height="8" viewBox="0 0 8 8"><path d="M7.5 0.5 V7.5 H0.5Z" fill="#000"/></svg>
<svg style="left:24px;top:241px;" width="8" height="8" viewBox="0 0 8 8"><path d="M7.5 0.5 V7.5 H0.5Z" fill="#000"/></svg>
<svg style="left:24px;top:277px;" width="8" height="8" viewBox="0 0 8 8"><path d="M7.5 0.5 V7.5 H0.5Z" fill="#000"/></svg>
<svg style="left:24px;top:320px;" width="8" height="8" viewBox="0 0 8 8"><path d="M7.5 0.5 V7.5 H0.5Z" fill="#000"/></svg>
<svg style="left:24px;top:390px;" width="8" height="8" viewBox="0 0 8 8"><path d="M7.5 0.5 V7.5 H0.5Z" fill="#000"/></svg>
<svg style="left:24px;top:425px;" width="8" height="8" viewBox="0 0 8 8"><path d="M7.5 0.5 V7.5 H0.5Z" fill="#000"/></svg>
<svg style="left:24px;top:460px;" width="8" height="8" viewBox="0 0 8 8"><path d="M7.5 0.5 V7.5 H0.5Z" fill="#000"/></svg>
<svg style="left:24px;top:502px;" width="8" height="8" viewBox="0 0 8 8"><path d="M7.5 0.5 V7.5 H0.5Z" fill="#000"/></svg>
<svg style="left:24px;top:544px;" width="8" height="8" viewBox="0 0 8 8"><path d="M7.5 0.5 V7.5 H0.5Z" fill="#000"/></svg>
<svg style="left:24px;top:580px;" width="8" height="8" viewBox="0 0 8 8"><path d="M7.5 0.5 V7.5 H0.5Z" fill="#000"/></svg>
<svg style="left:24px;top:623px;" width="8" height="8" viewBox="0 0 8 8"><path d="M7.5 0.5 V7.5 H0.5Z" fill="#000"/></svg>
<svg style="left:24px;top:701px;" width="8" height="8" viewBox="0 0 8 8"><path d="M7.5 0.5 V7.5 H0.5Z" fill="#000"/></svg>
<svg style="left:24px;top:736px;" width="8" height="8" viewBox="0 0 8 8"><path d="M7.5 0.5 V7.5 H0.5Z" fill="#000"/></svg>
<svg style="left:11px;top:149px;" width="16" height="18" viewBox="0 0 16 18"><path d="M3.5 1.5 L3.5 13 L6.5 10.5 L9 16 L11 15 L8.5 9.8 L12.5 9.5Z" fill="#fff" stroke="#8a8aa2" stroke-width="1.2"/></svg>
<svg style="left:10px;top:184px;" width="18" height="18" viewBox="0 0 18 18"><path d="M4 1 C6 6 2 10 6 16" fill="none" stroke="#888" stroke-width="1"/><rect x="3" y="4.5" width="3.5" height="3.5" fill="#fff" stroke="#333"/><path d="M8 8.5 L15 11.5 L9.5 15.5Z" fill="#333"/></svg>
<svg style="left:10px;top:227px;" width="17" height="17" viewBox="0 0 17 17"><path d="M5.5 1 V12 H16 M1 5.5 H12 V16" fill="none" stroke="#4a4a5c" stroke-width="2"/><path d="M3 14.5 L15 2.5" stroke="#4a4a5c" stroke-width="1.2"/></svg>
<svg style="left:9px;top:264px;" width="18" height="18" viewBox="0 0 18 18"><circle cx="7" cy="7" r="5.5" fill="#f4f4f8" stroke="#8a8a96" stroke-width="1.3"/><path d="M4.5 7.5 H9.5" stroke="#aaa"/><path d="M11 11 L16 16" stroke="#2a2a33" stroke-width="2.6"/></svg>
<svg style="left:9px;top:305px;" width="18" height="18" viewBox="0 0 18 18"><path d="M4 1 V7 M1 4 H7" stroke="#4a4a5c" stroke-width="1.1"/><path d="M5 10 q2 -3 3.5 0 t3.5 0 t3.5 2" fill="none" stroke="#4a4a5c" stroke-width="1.5"/></svg>
<svg style="left:10px;top:343px;" width="17" height="13" viewBox="0 0 17 13"><path d="M1.5 5.5 C2 1.5 5.2 0.8 6.8 4 C8.3 7.5 10 11.2 13 9.8 C15.2 8.6 15 6.2 13.6 5.6" fill="none" stroke="#2a2a33" stroke-width="1.9" stroke-linecap="round"/><circle cx="13.2" cy="6.4" r="2.1" fill="#2a2a33"/></svg>
<svg style="left:11px;top:378px;" width="15" height="14" viewBox="0 0 15 14"><defs><linearGradient id="rg" x1="0" y1="0" x2="0" y2="1"><stop offset=".5" stop-color="#fff"/><stop offset="1" stop-color="#c9c9d8"/></linearGradient></defs><rect x="1.5" y="1.5" width="11.5" height="10.5" fill="url(#rg)" stroke="#3f3f4c" stroke-width="1.1"/></svg>
<svg style="left:10px;top:412px;" width="16" height="16" viewBox="0 0 16 16"><circle cx="8" cy="8" r="6.3" fill="url(#rg)" stroke="#55556a" stroke-width="1.3"/></svg>
<svg style="left:10px;top:447px;" width="17" height="16" viewBox="0 0 17 16"><path d="M4.8 1.5 H11.5 L15.5 8 L11.5 14.5 H4.8 L1 8Z" fill="url(#rg)" stroke="#55556a" stroke-width="1.3"/></svg>
<span class="t" style="left:10px;top:486px;font-size:16px;line-height:20px;color:#33333f;font-weight:bold;">字</span>
<svg style="left:9px;top:531px;" width="18" height="17" viewBox="0 0 18 17"><path d="M3 14 L15 3" stroke="#222" stroke-width="1.8"/><path d="M1 11 L6 16 M12 1 L17 6" stroke="#222" stroke-width="1.3"/><path d="M2 15 L3 11.5 L5.5 14Z M16 2 L15 5.5 L12.5 3Z" fill="#222"/></svg>
<svg style="left:10px;top:566px;" width="18" height="19" viewBox="0 0 18 19"><path d="M4.5 4.5 L13 14" stroke="#555" stroke-width="1.2"/><rect x="2" y="2" width="5" height="5" fill="#c8713a" stroke="#7a3d1c"/><rect x="10.5" y="11.5" width="5" height="5" fill="#c8713a" stroke="#7a3d1c"/></svg>
<svg style="left:9px;top:608px;" width="19" height="20" viewBox="0 0 19 20"><path d="M2 5 L10 2 L17 5 V14 L10 18 L2 14Z" fill="#a9adc6" stroke="#7d829e"/><path d="M2 5 L10 8 V18 L2 14Z" fill="#f2f3f8" stroke="#7d829e"/><rect x="3.5" y="8" width="5" height="6.5" fill="#fff" stroke="#9a9db5" stroke-width=".8"/></svg>
<div style="left:4px;top:638px;width:29px;height:29px;background:#fff;border-right:1px solid #c4c4c4;border-bottom:1px solid #c4c4c4;box-sizing:border-box;"></div>
<svg style="left:9px;top:644px;" width="19" height="18" viewBox="0 0 19 18"><path d="M6.5 1.5 L13 6 Q10 10.5 5.8 8.2 Q4.5 4.5 6.5 1.5Z" fill="#fff" stroke="#55556a" stroke-width="1.2"/><path d="M6.5 7 Q9.5 9 12 6.5" stroke="#33334a" stroke-width="1.6" fill="none"/><path d="M6 8.5 L2.5 12 M1 10.5 L4.5 13.5" stroke="#666" stroke-width="1.2"/><defs><linearGradient id="tg2" x1="0" y1="0" x2="0" y2="1"><stop offset="0" stop-color="#c9c9d8"/><stop offset="1" stop-color="#33334a"/></linearGradient></defs><path d="M13 9.5 L17.5 16.5 H8.5Z" fill="url(#tg2)"/></svg>
<svg style="left:8px;top:686px;" width="20" height="20" viewBox="0 0 20 20"><rect x="1" y="11" width="7" height="8" fill="#e8892a" stroke="#b5601a"/><path d="M2 13 H5 V16" stroke="#f7c06a" fill="none"/><path d="M15.5 1.5 a2.4 2.4 0 0 1 3 3 L16.5 7 L13 3.5Z" fill="#23233a"/><path d="M11.5 3.5 L16.5 8.5" stroke="#23233a" stroke-width="2.4"/><path d="M13 6 L7 12" stroke="#3a3a55" stroke-width="2.5"/></svg>
<svg style="left:10px;top:722px;" width="18" height="18" viewBox="0 0 18 18"><path d="M3 4 L8 1.5 L11 7 L6 9.5Z" fill="#8a6a5a" stroke="#4a3a33"/><path d="M4 5.5 L2.5 3" stroke="#333"/><path d="M10 9 L16 17 H5Z" fill="#f2c94a" stroke="#d9a62a" stroke-width=".6"/><path d="M8 13 H12.5" stroke="#fff7cc"/></svg>
<svg style="left:9px;top:755px;" width="20" height="20" viewBox="0 0 20 20"><path d="M3 4 L8 1.5 L11.5 7.5 L6.5 10Z" fill="#b8865a" stroke="#5a3d22"/><path d="M4.5 5.5 L2 2" stroke="#333" stroke-width="1.2"/><rect x="8.5" y="9.5" width="7" height="6" fill="#f4e6d0" stroke="#5a3d22"/><rect x="11.5" y="12.5" width="7" height="6" fill="none" stroke="#5a3d22"/></svg>
<svg style="left:7px;top:804px;" width="22" height="22" viewBox="0 0 22 22"><circle cx="11" cy="11" r="9.5" fill="none" stroke="#d0d0d0" stroke-width="1.4"/><rect x="7" y="5.5" width="8" height="11" rx="1" fill="none" stroke="#d0d0d0" stroke-width="1.3"/></svg>
<div style="left:70.2px;top:87px;width:39.6px;height:52.8px;border:6.6px solid #f5372f;box-sizing:border-box;"></div>
<div style="left:-2.7px;top:631px;width:96.5px;height:49.6px;border:6.6px solid #f5372f;box-sizing:border-box;"></div>
</body></html>
